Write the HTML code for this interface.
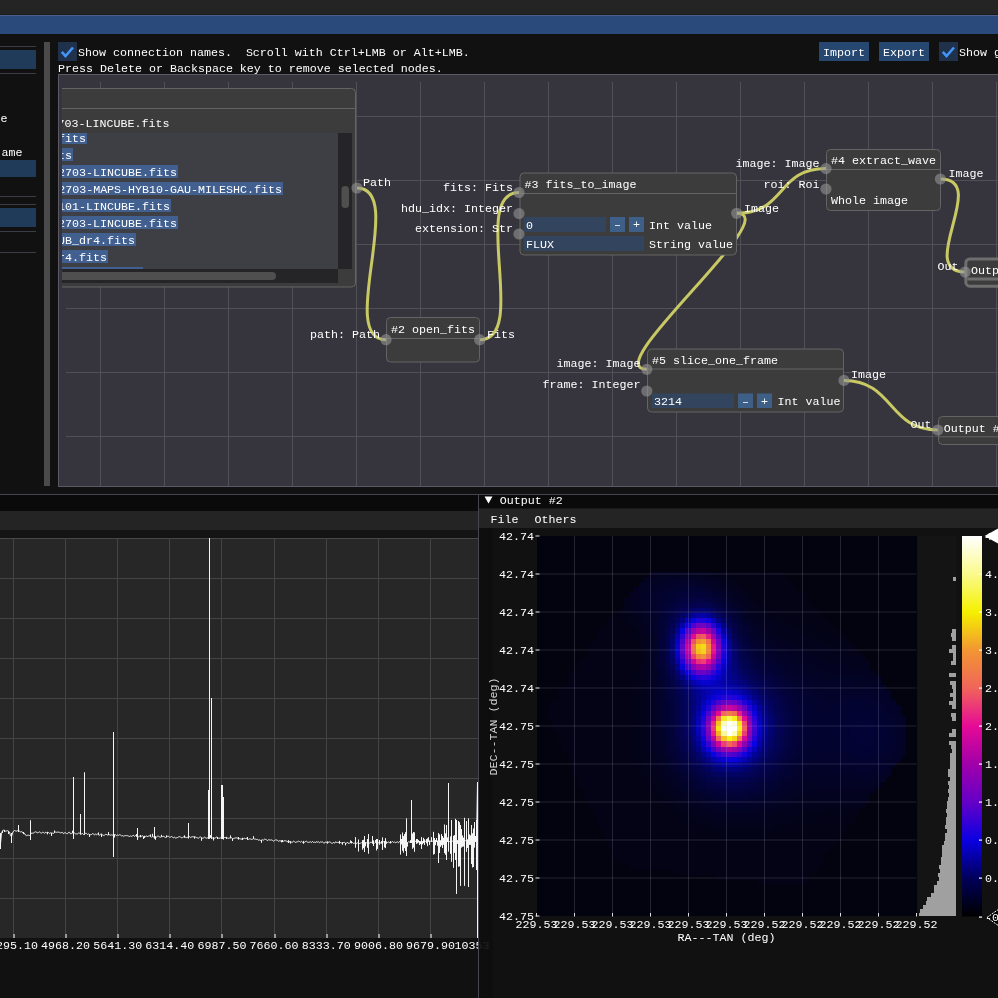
<!DOCTYPE html>
<html><head><meta charset="utf-8"><style>html,body{margin:0;padding:0;background:#111;overflow:hidden}svg{display:block;will-change:transform}text{font-family:"Liberation Mono",monospace;font-size:11.67px;white-space:pre}</style></head>
<body><svg width="998" height="998" viewBox="0 0 998 998" font-family="Liberation Mono" font-size="11.67"><rect x="0" y="0" width="998" height="998" fill="#111111" /><rect x="0" y="0" width="998" height="14" fill="#242424" /><rect x="0" y="14" width="998" height="1" fill="#1b1b1b" /><rect x="0" y="15" width="998" height="1" fill="#4a6189" /><rect x="0" y="16" width="998" height="18" fill="#294a7a" /><rect x="0" y="46" width="36" height="1" fill="#3c3c44" /><rect x="0" y="73" width="36" height="1" fill="#3c3c44" /><rect x="0" y="196" width="36" height="1" fill="#3c3c44" /><rect x="0" y="204" width="36" height="1" fill="#3c3c44" /><rect x="0" y="231" width="36" height="1" fill="#3c3c44" /><rect x="0" y="252" width="36" height="1" fill="#3c3c44" /><rect x="0" y="50" width="36" height="19" fill="#203a5a" /><rect x="0" y="160" width="36" height="17" fill="#203a5a" /><rect x="0" y="208" width="36" height="19" fill="#203a5a" /><text x="0.5" y="122" fill="#fff" >e</text><text x="1.5" y="156" fill="#fff" >ame</text><rect x="44" y="42" width="6" height="444" fill="#4a4a4a" /><rect x="58" y="42" width="19" height="19" fill="#1f314b" /><polyline points="61.8,51.8 65.5,56.1 73,47.5" fill="none" stroke="#4296fa" stroke-width="2.6"/><text x="78" y="56" fill="#fff" >Show connection names.  Scroll with Ctrl+LMB or Alt+LMB.</text><text x="58" y="72" fill="#fff" >Press Delete or Backspace key to remove selected nodes.</text><rect x="819" y="42" width="50" height="19" fill="#26476f" /><text x="844" y="56" fill="#fff" text-anchor="middle" >Import</text><rect x="879" y="42" width="50" height="19" fill="#26476f" /><text x="904" y="56" fill="#fff" text-anchor="middle" >Export</text><rect x="939" y="42" width="19" height="19" fill="#1f314b" /><polyline points="942.8,51.8 946.5,56.1 954,47.5" fill="none" stroke="#4296fa" stroke-width="2.6"/><text x="959" y="56" fill="#fff" >Show grid</text><rect x="58" y="74" width="940" height="413" fill="#36353d" /><rect x="58" y="74" width="940" height="1" fill="#5a5a66" /><rect x="58" y="486" width="940" height="1" fill="#5a5a66" /><rect x="58" y="74" width="1" height="413" fill="#5a5a66" /><rect x="100" y="82" width="1" height="404" fill="#505057" /><rect x="164" y="82" width="1" height="404" fill="#505057" /><rect x="228" y="82" width="1" height="404" fill="#505057" /><rect x="292" y="82" width="1" height="404" fill="#505057" /><rect x="356" y="82" width="1" height="404" fill="#505057" /><rect x="420" y="82" width="1" height="404" fill="#505057" /><rect x="484" y="82" width="1" height="404" fill="#505057" /><rect x="548" y="82" width="1" height="404" fill="#505057" /><rect x="612" y="82" width="1" height="404" fill="#505057" /><rect x="676" y="82" width="1" height="404" fill="#505057" /><rect x="740" y="82" width="1" height="404" fill="#505057" /><rect x="804" y="82" width="1" height="404" fill="#505057" /><rect x="868" y="82" width="1" height="404" fill="#505057" /><rect x="932" y="82" width="1" height="404" fill="#505057" /><rect x="996" y="82" width="1" height="404" fill="#505057" /><rect x="66" y="116" width="932" height="1" fill="#505057" /><rect x="66" y="180" width="932" height="1" fill="#505057" /><rect x="66" y="244" width="932" height="1" fill="#505057" /><rect x="66" y="308" width="932" height="1" fill="#505057" /><rect x="66" y="372" width="932" height="1" fill="#505057" /><rect x="66" y="436" width="932" height="1" fill="#505057" /><defs><clipPath id="c1"><rect x="62" y="74" width="940" height="420"/></clipPath><clipPath id="lb"><rect x="62" y="133" width="276" height="136"/></clipPath><clipPath id="cv"><rect x="59" y="75" width="939" height="411"/></clipPath></defs><g clip-path="url(#cv)"><path d="M844,380.4 C894,380.4 887.8,430 937.8,430" fill="none" stroke="#c8c864" stroke-width="3"/><path d="M736.7,213.3 C786.7,213.3 596.8,369.3 646.8,369.3" fill="none" stroke="#c8c864" stroke-width="3"/><path d="M940.4,179 C990.4,179 915.1,272 965.1,272" fill="none" stroke="#c8c864" stroke-width="3"/><path d="M736.7,213.3 C786.7,213.3 776,168.6 826,168.6" fill="none" stroke="#c8c864" stroke-width="3"/><path d="M479.7,339.7 C529.7,339.7 469,192.5 519,192.5" fill="none" stroke="#c8c864" stroke-width="3"/><path d="M357,188 C407,188 336,339.7 386,339.7" fill="none" stroke="#c8c864" stroke-width="3"/><g clip-path="url(#c1)"><rect x="20.5" y="88.5" width="335" height="198.5" rx="4" fill="#3c3c3c" stroke="#646464" stroke-width="1" /><rect x="21.0" y="108.0" width="334" height="1" fill="#646464" /><rect x="62" y="133" width="276" height="136" fill="#3e3e45" /><rect x="338" y="133" width="14" height="136" fill="#252528" /><rect x="341.5" y="186" width="7.5" height="22" rx="3.5" fill="#4f4f4f"/><rect x="62" y="269" width="276" height="14" fill="#252528" /><rect x="50" y="272" width="226" height="8" rx="4" fill="#4f4f4f"/><text x="169.5" y="127" fill="#fff" text-anchor="end" >manga-7443-12703-LINCUBE.fits</text><g clip-path="url(#lb)"><rect x="62" y="131" width="25" height="13" fill="#41608f" /><text x="86" y="142" fill="#fff" text-anchor="end" >manga-7443-12703-LOGCUBE.fits</text><rect x="62" y="148" width="11" height="13" fill="#41608f" /><text x="72" y="159" fill="#fff" text-anchor="end" >manga-8485-1901-MAPS.fits</text><rect x="62" y="165" width="116" height="13" fill="#41608f" /><text x="177" y="176" fill="#fff" text-anchor="end" >manga-7443-12703-LINCUBE.fits</text><rect x="62" y="182" width="221" height="13" fill="#41608f" /><text x="282" y="193" fill="#fff" text-anchor="end" >manga-7443-12703-MAPS-HYB10-GAU-MILESHC.fits</text><rect x="62" y="199" width="109" height="13" fill="#41608f" /><text x="170" y="210" fill="#fff" text-anchor="end" >manga-8485-12101-LINCUBE.fits</text><rect x="62" y="216" width="116" height="13" fill="#41608f" /><text x="177" y="227" fill="#fff" text-anchor="end" >manga-7443-12703-LINCUBE.fits</text><rect x="62" y="233" width="74" height="13" fill="#41608f" /><text x="135" y="244" fill="#fff" text-anchor="end" >manga-LINCUB_dr4.fits</text><rect x="62" y="250" width="46" height="13" fill="#41608f" /><text x="107" y="261" fill="#fff" text-anchor="end" >manga-dr4.fits</text><rect x="62" y="267" width="81" height="13" fill="#41608f" /><text x="142" y="278" fill="#fff" text-anchor="end" >manga-drpall-v2_4_3.fits</text></g></g><text x="363" y="185.5" fill="#fff" >Path</text><rect x="386.5" y="317.5" width="93" height="44.5" rx="4" fill="#3c3c3c" stroke="#646464" stroke-width="1" /><rect x="387.0" y="338.0" width="92" height="1" fill="#646464" /><text x="391" y="333" fill="#fff" >#2 open_fits</text><text x="380" y="338" fill="#fff" text-anchor="end" >path: Path</text><text x="487" y="338" fill="#fff" >Fits</text><rect x="520" y="173" width="216.5" height="82" rx="4" fill="#3c3c3c" stroke="#646464" stroke-width="1" /><rect x="520.5" y="193.0" width="215.5" height="1" fill="#646464" /><text x="524.5" y="187.5" fill="#fff" >#3 fits_to_image</text><rect x="524" y="217" width="82" height="15" fill="#32445e" /><text x="526" y="228.6" fill="#fff" >0</text><rect x="610" y="217" width="15" height="15" fill="#3e6088" /><text x="617.5" y="228.3" fill="#fff" text-anchor="middle" >–</text><rect x="629" y="217" width="15" height="15" fill="#3e6088" /><text x="636.5" y="228.3" fill="#fff" text-anchor="middle" >+</text><text x="649" y="229" fill="#fff" >Int value</text><rect x="524" y="236" width="120" height="15" fill="#32445e" /><text x="526" y="247.6" fill="#fff" >FLUX</text><text x="649" y="248" fill="#fff" >String value</text><text x="513" y="191" fill="#fff" text-anchor="end" >fits: Fits</text><text x="513" y="212" fill="#fff" text-anchor="end" >hdu_idx: Integer</text><text x="513" y="232" fill="#fff" text-anchor="end" >extension: Str</text><text x="744" y="211.5" fill="#fff" >Image</text><rect x="826.5" y="149.5" width="114" height="61" rx="4" fill="#3c3c3c" stroke="#646464" stroke-width="1" /><rect x="827.0" y="169.0" width="113" height="1" fill="#646464" /><text x="831" y="164" fill="#fff" >#4 extract_wave</text><text x="831" y="204" fill="#fff" >Whole image</text><text x="819.5" y="167" fill="#fff" text-anchor="end" >image: Image</text><text x="819.5" y="188" fill="#fff" text-anchor="end" >roi: Roi</text><text x="948.5" y="177" fill="#fff" >Image</text><rect x="647.5" y="349" width="196" height="63" rx="4" fill="#3c3c3c" stroke="#646464" stroke-width="1" /><rect x="648.0" y="368.5" width="195" height="1" fill="#646464" /><text x="652" y="364" fill="#fff" >#5 slice_one_frame</text><rect x="652" y="393.5" width="82" height="14.5" fill="#32445e" /><text x="654" y="405.1" fill="#fff" >3214</text><rect x="738" y="393.5" width="15" height="14.5" fill="#3e6088" /><text x="745.5" y="404.8" fill="#fff" text-anchor="middle" >–</text><rect x="757" y="393.5" width="15" height="14.5" fill="#3e6088" /><text x="764.5" y="404.8" fill="#fff" text-anchor="middle" >+</text><text x="777.5" y="405" fill="#fff" >Int value</text><text x="640.5" y="367" fill="#fff" text-anchor="end" >image: Image</text><text x="640.5" y="388" fill="#fff" text-anchor="end" >frame: Integer</text><text x="851" y="378" fill="#fff" >Image</text><rect x="965.8" y="259" width="60" height="27.2" rx="4" fill="#3c3c3c" stroke="#6e6e6e" stroke-width="3" /><rect x="967.3" y="277.5" width="57" height="3" fill="#6e6e6e" /><text x="971" y="273.6" fill="#fff" >Output #1</text><text x="958.5" y="269.5" fill="#fff" text-anchor="end" >Out</text><rect x="938.5" y="416.5" width="80" height="28" rx="4" fill="#3c3c3c" stroke="#646464" stroke-width="1" /><rect x="939.0" y="436.3" width="79" height="1" fill="#646464" /><text x="943.8" y="431.6" fill="#fff" >Output #2</text><text x="931.5" y="427.5" fill="#fff" text-anchor="end" >Out</text><circle cx="357" cy="188" r="5.6" fill="rgba(150,150,150,0.59)"/><circle cx="386" cy="339.7" r="5.6" fill="rgba(150,150,150,0.59)"/><circle cx="479.7" cy="339.7" r="5.6" fill="rgba(150,150,150,0.59)"/><circle cx="519" cy="192.5" r="5.6" fill="rgba(150,150,150,0.59)"/><circle cx="519" cy="213.6" r="5.6" fill="rgba(150,150,150,0.59)"/><circle cx="519" cy="234" r="5.6" fill="rgba(150,150,150,0.59)"/><circle cx="736.7" cy="213.3" r="5.6" fill="rgba(150,150,150,0.59)"/><circle cx="826" cy="168.6" r="5.6" fill="rgba(150,150,150,0.59)"/><circle cx="826" cy="189" r="5.6" fill="rgba(150,150,150,0.59)"/><circle cx="940.4" cy="179" r="5.6" fill="rgba(150,150,150,0.59)"/><circle cx="965.1" cy="272" r="5.6" fill="rgba(150,150,150,0.59)"/><circle cx="646.8" cy="369.3" r="5.6" fill="rgba(150,150,150,0.59)"/><circle cx="646.8" cy="391" r="5.6" fill="rgba(150,150,150,0.59)"/><circle cx="844" cy="380.4" r="5.6" fill="rgba(150,150,150,0.59)"/><circle cx="937.8" cy="430" r="5.6" fill="rgba(150,150,150,0.59)"/></g><rect x="0" y="494" width="998" height="1" fill="#46464f" /><rect x="0" y="495" width="478" height="16" fill="#0a0a0a" /><rect x="0" y="511" width="478" height="19" fill="#242424" /><rect x="0" y="530" width="478" height="8" fill="#141414" /><rect x="0" y="538" width="478" height="400" fill="#272727" /><rect x="0" y="538" width="478" height="1" fill="#484848" /><rect x="13" y="539" width="1" height="399" fill="#444444" /><rect x="65" y="539" width="1" height="399" fill="#444444" /><rect x="117" y="539" width="1" height="399" fill="#444444" /><rect x="169" y="539" width="1" height="399" fill="#444444" /><rect x="221" y="539" width="1" height="399" fill="#444444" /><rect x="274" y="539" width="1" height="399" fill="#444444" /><rect x="326" y="539" width="1" height="399" fill="#444444" /><rect x="378" y="539" width="1" height="399" fill="#444444" /><rect x="430" y="539" width="1" height="399" fill="#444444" /><rect x="0" y="578" width="478" height="1" fill="#444444" /><rect x="0" y="618" width="478" height="1" fill="#444444" /><rect x="0" y="658" width="478" height="1" fill="#444444" /><rect x="0" y="698" width="478" height="1" fill="#444444" /><rect x="0" y="738" width="478" height="1" fill="#444444" /><rect x="0" y="778" width="478" height="1" fill="#444444" /><rect x="0" y="818" width="478" height="1" fill="#444444" /><rect x="0" y="858" width="478" height="1" fill="#444444" /><rect x="0" y="898" width="478" height="1" fill="#444444" /><rect x="13" y="934" width="2" height="4" fill="#9a9a9a" /><rect x="65" y="934" width="2" height="4" fill="#9a9a9a" /><rect x="117" y="934" width="2" height="4" fill="#9a9a9a" /><rect x="169" y="934" width="2" height="4" fill="#9a9a9a" /><rect x="221" y="934" width="2" height="4" fill="#9a9a9a" /><rect x="274" y="934" width="2" height="4" fill="#9a9a9a" /><rect x="326" y="934" width="2" height="4" fill="#9a9a9a" /><rect x="378" y="934" width="2" height="4" fill="#9a9a9a" /><rect x="430" y="934" width="2" height="4" fill="#9a9a9a" /><defs><clipPath id="lw"><rect x="0" y="0" width="478" height="998"/></clipPath><clipPath id="rw"><rect x="478" y="0" width="520" height="998"/></clipPath></defs><text x="13.4" y="949" fill="#fff" text-anchor="middle" >4295.10</text><text x="65.5" y="949" fill="#fff" text-anchor="middle" >4968.20</text><text x="117.7" y="949" fill="#fff" text-anchor="middle" >5641.30</text><text x="169.8" y="949" fill="#fff" text-anchor="middle" >6314.40</text><text x="222.0" y="949" fill="#fff" text-anchor="middle" >6987.50</text><text x="274.1" y="949" fill="#fff" text-anchor="middle" >7660.60</text><text x="326.2" y="949" fill="#fff" text-anchor="middle" >8333.70</text><text x="378.4" y="949" fill="#fff" text-anchor="middle" >9006.80</text><text x="430.5" y="949" fill="#fff" text-anchor="middle" >9679.90</text><g clip-path="url(#lw)"><text x="482.5" y="949" fill="#fff" text-anchor="middle" >10353.00</text><path d="M0.5,843.7 L0.5,833.0 L0.5,849.0 L0.5,843.7 L1.5,833.3 L2.5,830.8 L2.5,830.8 L2.5,832.8 L2.5,830.8 L3.5,830.2 L4.5,830.2 L4.5,830.2 L4.5,832.0 L4.5,830.2 L5.5,831.3 L6.5,830.9 L7.5,830.7 L8.5,831.3 L8.5,831.3 L8.5,834.0 L8.5,831.3 L9.5,832.0 L10.5,835.7 L11.5,836.7 L11.5,833.0 L11.5,843.0 L11.5,836.7 L12.5,833.0 L13.5,831.1 L14.5,830.5 L15.5,830.9 L16.5,831.1 L17.5,830.7 L18.5,831.3 L18.5,825.0 L18.5,832.0 L18.5,831.3 L19.5,831.1 L20.5,831.9 L21.5,831.7 L22.5,832.1 L23.5,833.7 L23.5,832.0 L23.5,833.7 L23.5,833.7 L24.5,833.3 L25.5,835.1 L26.5,835.6 L27.5,835.3 L28.5,835.1 L29.5,835.5 L30.5,834.5 L30.5,820.5 L30.5,840.0 L30.5,834.5 L31.5,833.0 L32.5,833.2 L33.5,833.0 L34.5,832.3 L35.5,831.8 L36.5,832.0 L37.5,833.0 L38.5,832.4 L39.5,831.9 L40.5,832.7 L41.5,833.1 L42.5,832.3 L43.5,832.4 L44.5,833.4 L45.5,832.2 L46.5,832.7 L47.5,832.3 L47.5,832.3 L47.5,834.2 L47.5,832.3 L48.5,832.5 L49.5,833.4 L50.5,832.8 L51.5,833.0 L51.5,833.0 L51.5,835.8 L51.5,833.0 L52.5,833.2 L53.5,833.3 L54.5,832.6 L54.5,830.7 L54.5,832.6 L54.5,832.6 L55.5,832.1 L56.5,832.3 L57.5,832.1 L58.5,832.2 L59.5,832.1 L60.5,833.1 L61.5,832.6 L62.5,832.3 L63.5,833.7 L64.5,832.9 L65.5,832.7 L66.5,833.5 L67.5,833.7 L68.5,832.4 L69.5,832.2 L70.5,833.8 L71.5,833.4 L72.5,832.9 L72.5,830.8 L72.5,832.9 L72.5,832.9 L73.5,833.2 L73.5,777.0 L73.5,839.0 L73.5,833.2 L74.5,833.0 L75.5,833.8 L76.5,833.9 L77.5,833.9 L78.5,833.0 L79.5,833.2 L80.5,833.2 L80.5,814.0 L80.5,834.5 L80.5,833.2 L81.5,833.9 L82.5,833.5 L83.5,834.5 L84.5,833.5 L84.5,772.5 L84.5,834.7 L84.5,833.5 L85.5,833.3 L86.5,833.4 L87.5,834.5 L88.5,833.9 L89.5,834.5 L89.5,834.5 L89.5,836.8 L89.5,834.5 L90.5,834.7 L91.5,834.5 L92.5,833.6 L93.5,833.9 L94.5,835.0 L95.5,834.1 L96.5,834.7 L97.5,833.8 L98.5,834.9 L98.5,832.7 L98.5,834.9 L98.5,834.9 L99.5,835.2 L100.5,834.3 L101.5,834.0 L101.5,834.0 L101.5,836.9 L101.5,834.0 L102.5,834.9 L103.5,835.4 L104.5,835.3 L105.5,834.3 L106.5,834.5 L107.5,835.0 L108.5,834.8 L108.5,832.4 L108.5,834.8 L108.5,834.8 L109.5,834.7 L110.5,835.2 L111.5,834.9 L112.5,835.1 L113.5,835.2 L113.5,732.0 L113.5,857.0 L113.5,835.2 L114.5,834.7 L114.5,834.7 L114.5,837.3 L114.5,834.7 L115.5,834.7 L116.5,835.6 L117.5,835.0 L118.5,835.4 L119.5,834.7 L120.5,835.0 L121.5,835.9 L122.5,835.6 L123.5,836.2 L124.5,835.8 L125.5,835.6 L126.5,835.6 L127.5,835.7 L128.5,836.1 L129.5,836.5 L130.5,835.9 L131.5,836.4 L132.5,835.8 L133.5,835.3 L134.5,836.4 L135.5,835.5 L136.5,836.3 L136.5,834.0 L136.5,836.3 L136.5,836.3 L137.5,836.8 L137.5,828.0 L137.5,840.0 L137.5,836.8 L138.5,836.9 L139.5,836.2 L140.5,836.8 L140.5,835.1 L140.5,836.8 L140.5,836.8 L141.5,836.3 L142.5,835.8 L143.5,836.7 L143.5,836.7 L143.5,838.8 L143.5,836.7 L144.5,836.3 L144.5,836.3 L144.5,837.9 L144.5,836.3 L145.5,836.6 L146.5,835.8 L147.5,837.0 L148.5,835.9 L149.5,835.8 L150.5,836.3 L150.5,834.6 L150.5,836.3 L150.5,836.3 L151.5,837.3 L152.5,836.3 L152.5,833.9 L152.5,836.3 L152.5,836.3 L153.5,836.9 L154.5,836.1 L154.5,827.0 L154.5,838.5 L154.5,836.1 L155.5,836.7 L155.5,836.7 L155.5,839.6 L155.5,836.7 L156.5,837.1 L157.5,836.2 L158.5,836.2 L159.5,836.9 L160.5,837.1 L161.5,836.7 L161.5,834.9 L161.5,836.7 L161.5,836.7 L162.5,836.6 L163.5,836.3 L164.5,836.8 L165.5,837.5 L166.5,837.1 L166.5,835.6 L166.5,837.1 L166.5,837.1 L167.5,836.3 L168.5,836.3 L169.5,837.2 L170.5,837.1 L171.5,836.5 L172.5,837.1 L173.5,837.7 L174.5,837.2 L175.5,838.0 L176.5,837.8 L177.5,837.5 L178.5,837.0 L179.5,836.6 L180.5,836.9 L181.5,837.9 L182.5,837.6 L183.5,836.9 L184.5,837.3 L184.5,835.6 L184.5,837.3 L184.5,837.3 L185.5,837.0 L186.5,838.1 L187.5,837.0 L188.5,837.1 L188.5,823.0 L188.5,838.4 L188.5,837.1 L189.5,836.6 L190.5,837.4 L191.5,837.0 L192.5,836.7 L193.5,836.8 L194.5,836.8 L194.5,836.8 L194.5,838.4 L194.5,836.8 L195.5,837.1 L196.5,837.6 L197.5,837.8 L198.5,838.2 L199.5,837.3 L200.5,837.0 L201.5,837.8 L201.5,837.8 L201.5,840.5 L201.5,837.8 L202.5,838.2 L203.5,838.0 L204.5,837.1 L205.5,837.7 L206.5,838.2 L207.5,837.8 L208.5,838.0 L208.5,790.0 L208.5,838.7 L208.5,838.0 L209.5,837.3 L209.5,538.0 L209.5,838.7 L209.5,837.3 L210.5,837.5 L210.5,835.2 L210.5,837.5 L210.5,837.5 L211.5,837.8 L211.5,698.0 L211.5,838.7 L211.5,837.8 L212.5,838.0 L213.5,837.7 L213.5,837.7 L213.5,840.3 L213.5,837.7 L214.5,838.2 L215.5,837.8 L216.5,837.1 L217.5,837.4 L217.5,837.4 L217.5,839.0 L217.5,837.4 L218.5,838.2 L219.5,838.2 L220.5,837.9 L221.5,837.8 L221.5,785.0 L221.5,838.9 L221.5,837.8 L222.5,838.3 L222.5,785.0 L222.5,838.9 L222.5,838.3 L223.5,838.1 L223.5,797.0 L223.5,839.4 L223.5,838.1 L224.5,837.5 L225.5,837.6 L226.5,837.2 L226.5,837.2 L226.5,838.7 L226.5,837.2 L227.5,838.2 L228.5,838.3 L229.5,838.0 L230.5,838.0 L230.5,835.6 L230.5,838.0 L230.5,838.0 L231.5,837.6 L232.5,838.8 L232.5,838.8 L232.5,840.8 L232.5,838.8 L233.5,838.7 L234.5,838.2 L235.5,837.9 L236.5,837.9 L237.5,837.9 L238.5,839.2 L238.5,837.0 L238.5,839.2 L238.5,839.2 L239.5,838.6 L240.5,838.9 L241.5,839.3 L242.5,838.0 L242.5,838.0 L242.5,839.9 L242.5,838.0 L243.5,838.7 L244.5,838.3 L245.5,838.6 L246.5,838.1 L247.5,839.5 L247.5,837.2 L247.5,839.5 L247.5,839.5 L248.5,839.4 L249.5,838.8 L250.5,839.0 L251.5,839.4 L252.5,839.2 L253.5,838.6 L253.5,836.4 L253.5,838.6 L253.5,838.6 L254.5,839.1 L255.5,839.1 L256.5,839.5 L257.5,839.4 L258.5,840.2 L259.5,839.9 L260.5,840.4 L261.5,840.2 L261.5,840.2 L261.5,842.6 L261.5,840.2 L262.5,839.8 L263.5,840.1 L264.5,839.2 L265.5,839.4 L266.5,839.8 L267.5,840.5 L268.5,839.8 L269.5,839.9 L270.5,840.1 L271.5,839.9 L272.5,840.4 L273.5,841.1 L274.5,840.5 L275.5,839.9 L276.5,840.0 L277.5,840.3 L278.5,841.4 L279.5,840.7 L280.5,840.9 L281.5,840.7 L281.5,840.7 L281.5,842.2 L281.5,840.7 L282.5,841.7 L282.5,840.0 L282.5,841.7 L282.5,841.7 L283.5,841.3 L284.5,840.7 L285.5,840.8 L286.5,841.1 L287.5,841.8 L288.5,840.6 L288.5,840.6 L288.5,843.0 L288.5,840.6 L289.5,842.0 L290.5,841.6 L290.5,841.6 L290.5,843.4 L290.5,841.6 L291.5,842.2 L292.5,842.1 L293.5,841.2 L294.5,841.7 L295.5,842.4 L296.5,842.0 L297.5,841.8 L298.5,841.2 L299.5,841.5 L300.5,842.2 L301.5,841.4 L302.5,842.3 L303.5,841.4 L303.5,841.4 L303.5,843.5 L303.5,841.4 L304.5,842.2 L305.5,841.6 L306.5,841.3 L307.5,842.1 L308.5,842.4 L309.5,842.1 L310.5,841.8 L311.5,842.5 L312.5,841.4 L313.5,842.5 L314.5,841.9 L315.5,842.9 L316.5,841.5 L317.5,842.2 L318.5,841.8 L319.5,842.7 L320.5,841.9 L321.5,842.1 L322.5,841.9 L323.5,842.8 L324.5,843.1 L325.5,841.9 L326.5,842.3 L327.5,843.2 L327.5,841.6 L327.5,843.2 L327.5,843.2 L328.5,842.0 L329.5,841.9 L330.5,842.3 L331.5,843.1 L332.5,843.3 L333.5,842.3 L334.5,843.3 L335.5,841.8 L336.5,842.4 L337.5,842.4 L338.5,842.3 L339.5,843.4 L339.5,840.9 L339.5,843.4 L339.5,843.4 L340.5,842.2 L341.5,843.2 L342.5,842.6 L342.5,842.6 L342.5,844.5 L342.5,842.6 L343.5,842.5 L344.5,842.3 L345.5,843.4 L345.5,843.4 L345.5,845.2 L345.5,843.4 L346.5,843.3 L347.5,842.1 L348.5,843.5 L349.5,843.2 L350.5,842.6 L350.5,840.6 L350.5,842.6 L350.5,842.6 L351.5,843.0 L351.5,841.3 L351.5,843.0 L351.5,843.0 L352.5,842.6 L353.5,843.3 L354.5,843.1 L355.5,842.2 L355.5,837.3 L355.5,847.5 L355.5,842.2 L356.5,843.7 L357.5,842.8 L358.5,843.7 L358.5,839.7 L358.5,851.3 L358.5,843.7 L359.5,843.5 L360.5,843.2 L361.5,842.7 L362.5,842.3 L362.5,840.3 L362.5,849.5 L362.5,842.3 L363.5,842.2 L363.5,839.9 L363.5,848.1 L363.5,842.2 L364.5,843.7 L364.5,836.0 L364.5,852.0 L364.5,843.7 L365.5,843.6 L365.5,842.3 L365.5,846.2 L365.5,843.6 L366.5,842.8 L367.5,842.7 L367.5,839.2 L367.5,847.6 L367.5,842.7 L368.5,843.1 L368.5,834.0 L368.5,853.5 L368.5,843.1 L369.5,843.3 L370.5,842.1 L371.5,842.4 L372.5,842.5 L372.5,836.0 L372.5,843.7 L372.5,842.5 L373.5,842.2 L373.5,840.6 L373.5,845.9 L373.5,842.2 L374.5,843.3 L375.5,842.3 L375.5,840.3 L375.5,842.3 L375.5,842.3 L376.5,842.6 L376.5,839.0 L376.5,850.3 L376.5,842.6 L377.5,843.3 L377.5,839.1 L377.5,848.7 L377.5,843.3 L378.5,843.1 L379.5,841.8 L379.5,840.0 L379.5,844.6 L379.5,841.8 L380.5,843.2 L381.5,843.2 L381.5,841.3 L381.5,843.2 L381.5,843.2 L382.5,842.4 L382.5,837.6 L382.5,849.8 L382.5,842.4 L383.5,841.8 L384.5,842.6 L384.5,841.0 L384.5,847.2 L384.5,842.6 L385.5,841.9 L385.5,838.3 L385.5,848.1 L385.5,841.9 L386.5,841.9 L386.5,841.9 L386.5,843.5 L386.5,841.9 L387.5,842.6 L388.5,842.0 L389.5,842.7 L390.5,841.5 L390.5,841.5 L390.5,843.3 L390.5,841.5 L391.5,842.3 L392.5,841.5 L393.5,842.5 L394.5,841.8 L395.5,842.8 L396.5,842.2 L397.5,841.9 L398.5,842.8 L399.5,841.5 L400.5,841.5 L400.5,834.7 L400.5,854.4 L400.5,841.5 L401.5,842.5 L401.5,839.0 L401.5,844.3 L401.5,842.5 L402.5,841.4 L402.5,832.7 L402.5,850.5 L402.5,841.4 L403.5,842.6 L403.5,836.3 L403.5,852.5 L403.5,842.6 L404.5,841.9 L404.5,834.3 L404.5,848.1 L404.5,841.9 L405.5,842.6 L405.5,832.4 L405.5,851.0 L405.5,842.6 L406.5,842.7 L406.5,818.6 L406.5,856.0 L406.5,842.7 L407.5,842.7 L407.5,842.5 L407.5,846.4 L407.5,842.7 L408.5,841.7 L409.5,842.1 L410.5,841.3 L410.5,840.4 L410.5,842.9 L410.5,841.3 L411.5,842.4 L411.5,800.0 L411.5,842.8 L411.5,842.4 L412.5,841.3 L412.5,833.7 L412.5,848.7 L412.5,841.3 L413.5,841.6 L413.5,832.1 L413.5,847.4 L413.5,841.6 L414.5,842.4 L414.5,832.6 L414.5,851.6 L414.5,842.4 L415.5,841.1 L416.5,841.2 L416.5,839.0 L416.5,843.7 L416.5,841.2 L417.5,841.5 L417.5,839.1 L417.5,843.2 L417.5,841.5 L418.5,842.0 L418.5,840.3 L418.5,842.1 L418.5,842.0 L419.5,841.9 L419.5,841.0 L419.5,845.0 L419.5,841.9 L420.5,842.2 L420.5,841.5 L420.5,844.1 L420.5,842.2 L421.5,841.1 L421.5,837.3 L421.5,848.8 L421.5,841.1 L422.5,841.6 L422.5,841.5 L422.5,844.2 L422.5,841.6 L423.5,841.0 L423.5,837.9 L423.5,843.1 L423.5,841.0 L424.5,841.0 L424.5,839.5 L424.5,844.8 L424.5,841.0 L425.5,841.1 L426.5,842.5 L426.5,839.2 L426.5,843.2 L426.5,842.5 L427.5,842.4 L427.5,838.6 L427.5,846.1 L427.5,842.4 L428.5,841.1 L428.5,837.4 L428.5,841.4 L428.5,841.1 L429.5,841.4 L429.5,840.7 L429.5,845.0 L429.5,841.4 L430.5,841.2 L431.5,841.0 L431.5,837.3 L431.5,841.9 L431.5,841.0 L432.5,841.2 L433.5,841.1 L433.5,831.9 L433.5,854.4 L433.5,841.1 L434.5,842.2 L434.5,838.2 L434.5,853.8 L434.5,842.2 L435.5,841.6 L435.5,840.2 L435.5,845.1 L435.5,841.6 L436.5,841.6 L436.5,838.1 L436.5,842.0 L436.5,841.6 L437.5,842.3 L437.5,840.7 L437.5,845.5 L437.5,842.3 L438.5,841.1 L438.5,833.0 L438.5,863.0 L438.5,841.1 L439.5,841.6 L439.5,834.6 L439.5,853.0 L439.5,841.6 L440.5,841.0 L440.5,840.6 L440.5,846.7 L440.5,841.0 L441.5,841.1 L441.5,834.2 L441.5,845.2 L441.5,841.1 L442.5,841.7 L442.5,836.1 L442.5,847.8 L442.5,841.7 L443.5,840.9 L443.5,837.9 L443.5,844.5 L443.5,840.9 L444.5,842.1 L444.5,824.7 L444.5,853.1 L444.5,842.1 L445.5,840.7 L445.5,833.6 L445.5,854.5 L445.5,840.7 L446.5,841.2 L446.5,825.0 L446.5,860.0 L446.5,841.2 L447.5,840.9 L447.5,837.6 L447.5,841.9 L447.5,840.9 L448.5,842.1 L448.5,783.0 L448.5,851.4 L448.5,842.1 L449.5,841.6 L450.5,841.8 L450.5,836.6 L450.5,853.6 L450.5,841.8 L451.5,841.6 L451.5,820.0 L451.5,861.6 L451.5,841.6 L452.5,841.2 L453.5,841.7 L453.5,835.9 L453.5,867.6 L453.5,841.7 L454.5,841.4 L454.5,835.2 L454.5,852.6 L454.5,841.4 L455.5,841.7 L455.5,818.9 L455.5,859.9 L455.5,841.7 L456.5,840.7 L456.5,820.0 L456.5,893.8 L456.5,840.7 L457.5,841.5 L457.5,840.3 L457.5,843.7 L457.5,841.5 L458.5,840.9 L458.5,821.1 L458.5,866.5 L458.5,840.9 L459.5,841.6 L459.5,822.4 L459.5,866.2 L459.5,841.6 L460.5,841.2 L460.5,825.0 L460.5,885.7 L460.5,841.2 L461.5,840.6 L461.5,829.2 L461.5,847.4 L461.5,840.6 L462.5,841.6 L462.5,835.7 L462.5,846.6 L462.5,841.6 L463.5,840.8 L463.5,837.8 L463.5,846.3 L463.5,840.8 L464.5,841.2 L464.5,817.9 L464.5,885.7 L464.5,841.2 L465.5,840.7 L466.5,840.4 L466.5,821.2 L466.5,851.6 L466.5,840.4 L467.5,841.8 L467.5,839.6 L467.5,848.0 L467.5,841.8 L468.5,840.8 L468.5,818.6 L468.5,887.0 L468.5,840.8 L469.5,841.4 L469.5,834.6 L469.5,844.7 L469.5,841.4 L470.5,841.6 L470.5,835.6 L470.5,844.7 L470.5,841.6 L471.5,841.4 L471.5,825.0 L471.5,864.0 L471.5,841.4 L472.5,841.3 L472.5,833.5 L472.5,867.3 L472.5,841.3 L473.5,840.3 L473.5,828.7 L473.5,866.7 L473.5,840.3 L474.5,840.5 L474.5,822.3 L474.5,847.4 L474.5,840.5 L475.5,841.2 L475.5,836.1 L475.5,841.7 L475.5,841.2 L476.5,841.2 L476.5,820.0 L476.5,870.0 L476.5,841.2 L477.5,782.0 L477.5,782.0 L477.5,938.0 L477.5,782.0" fill="none" stroke="#f4f4f4" stroke-width="1" stroke-linejoin="bevel"/></g><rect x="478" y="494" width="1" height="504" fill="#46464f" /><rect x="479" y="495" width="519" height="13.5" fill="#0a0a0a" /><polygon points="484.5,496.5 492.5,496.5 488.5,503.5" fill="#fff"/><text x="499.8" y="504" fill="#fff" >Output #2</text><rect x="479" y="508.5" width="519" height="19.5" fill="#242424" /><text x="490.5" y="523" fill="#fff" >File</text><text x="534.6" y="523" fill="#fff" >Others</text><rect x="479" y="528" width="14" height="470" fill="#0e0e0e" /><defs><clipPath id="rw2"><rect x="478" y="0" width="12" height="998"/></clipPath></defs><g clip-path="url(#rw2)" opacity="0.08"><text x="482.5" y="949" fill="#fff" text-anchor="middle" >10353.00</text></g><text x="0" y="0" fill="#d4d4d4" font-family="Liberation Mono" font-size="11.67" text-anchor="middle" transform="translate(496.5,726.5) rotate(-90)">DEC--TAN (deg)</text><g shape-rendering="crispEdges"><rect x="536.50" y="536.00" width="380.30" height="5.44" fill="#03030f"/><rect x="536.50" y="541.14" width="380.30" height="5.44" fill="#03030f"/><rect x="536.50" y="546.27" width="380.30" height="5.44" fill="#03030f"/><rect x="536.50" y="551.41" width="380.30" height="5.44" fill="#03030f"/><rect x="536.50" y="556.54" width="380.30" height="5.44" fill="#03030f"/><rect x="536.50" y="561.68" width="380.30" height="5.44" fill="#03030f"/><rect x="536.50" y="566.81" width="380.30" height="5.44" fill="#03030f"/><rect x="536.50" y="571.95" width="113.27" height="5.44" fill="#03030f"/><rect x="649.47" y="571.95" width="10.57" height="5.44" fill="#03031e"/><rect x="659.74" y="571.95" width="41.38" height="5.44" fill="#030321"/><rect x="700.82" y="571.95" width="10.57" height="5.44" fill="#03031e"/><rect x="711.09" y="571.95" width="5.44" height="5.44" fill="#03031b"/><rect x="716.23" y="571.95" width="10.57" height="5.44" fill="#030318"/><rect x="726.50" y="571.95" width="56.79" height="5.44" fill="#030315"/><rect x="782.99" y="571.95" width="133.81" height="5.44" fill="#03030f"/><rect x="536.50" y="577.08" width="108.14" height="5.44" fill="#03030f"/><rect x="644.34" y="577.08" width="10.57" height="5.44" fill="#030321"/><rect x="654.61" y="577.08" width="15.71" height="5.44" fill="#030324"/><rect x="670.01" y="577.08" width="25.98" height="5.44" fill="#030327"/><rect x="695.69" y="577.08" width="10.57" height="5.44" fill="#030324"/><rect x="705.96" y="577.08" width="10.57" height="5.44" fill="#030321"/><rect x="716.23" y="577.08" width="5.44" height="5.44" fill="#03031e"/><rect x="721.36" y="577.08" width="5.44" height="5.44" fill="#03031b"/><rect x="726.50" y="577.08" width="10.57" height="5.44" fill="#030318"/><rect x="736.77" y="577.08" width="51.65" height="5.44" fill="#030315"/><rect x="788.12" y="577.08" width="128.68" height="5.44" fill="#03030f"/><rect x="536.50" y="582.22" width="103.00" height="5.44" fill="#03030f"/><rect x="639.20" y="582.22" width="5.44" height="5.44" fill="#030321"/><rect x="644.34" y="582.22" width="10.57" height="5.44" fill="#030324"/><rect x="654.61" y="582.22" width="10.57" height="5.44" fill="#030327"/><rect x="664.88" y="582.22" width="10.57" height="5.44" fill="#03032a"/><rect x="675.15" y="582.22" width="20.84" height="5.44" fill="#03032d"/><rect x="695.69" y="582.22" width="10.57" height="5.44" fill="#03032a"/><rect x="705.96" y="582.22" width="5.44" height="5.44" fill="#030327"/><rect x="711.09" y="582.22" width="5.44" height="5.44" fill="#030324"/><rect x="716.23" y="582.22" width="5.44" height="5.44" fill="#030321"/><rect x="721.36" y="582.22" width="5.44" height="5.44" fill="#03031e"/><rect x="726.50" y="582.22" width="10.57" height="5.44" fill="#03031b"/><rect x="736.77" y="582.22" width="5.44" height="5.44" fill="#030318"/><rect x="741.91" y="582.22" width="51.65" height="5.44" fill="#030315"/><rect x="793.26" y="582.22" width="123.54" height="5.44" fill="#03030f"/><rect x="536.50" y="587.35" width="97.87" height="5.44" fill="#03030f"/><rect x="634.07" y="587.35" width="5.44" height="5.44" fill="#030321"/><rect x="639.20" y="587.35" width="10.57" height="5.44" fill="#030324"/><rect x="649.47" y="587.35" width="5.44" height="5.44" fill="#030327"/><rect x="654.61" y="587.35" width="10.57" height="5.44" fill="#03032a"/><rect x="664.88" y="587.35" width="5.44" height="5.44" fill="#03032d"/><rect x="670.01" y="587.35" width="10.57" height="5.44" fill="#030330"/><rect x="680.28" y="587.35" width="20.84" height="5.44" fill="#030333"/><rect x="700.82" y="587.35" width="5.44" height="5.44" fill="#030330"/><rect x="705.96" y="587.35" width="5.44" height="5.44" fill="#03032d"/><rect x="711.09" y="587.35" width="5.44" height="5.44" fill="#03032a"/><rect x="716.23" y="587.35" width="5.44" height="5.44" fill="#030327"/><rect x="721.36" y="587.35" width="5.44" height="5.44" fill="#030324"/><rect x="726.50" y="587.35" width="5.44" height="5.44" fill="#030321"/><rect x="731.64" y="587.35" width="5.44" height="5.44" fill="#03031e"/><rect x="736.77" y="587.35" width="5.44" height="5.44" fill="#03031b"/><rect x="741.91" y="587.35" width="5.44" height="5.44" fill="#030318"/><rect x="747.04" y="587.35" width="51.65" height="5.44" fill="#030315"/><rect x="798.39" y="587.35" width="118.41" height="5.44" fill="#03030f"/><rect x="536.50" y="592.49" width="92.73" height="5.44" fill="#03030f"/><rect x="628.93" y="592.49" width="5.44" height="5.44" fill="#03031e"/><rect x="634.07" y="592.49" width="5.44" height="5.44" fill="#030321"/><rect x="639.20" y="592.49" width="5.44" height="5.44" fill="#030324"/><rect x="644.34" y="592.49" width="5.44" height="5.44" fill="#030327"/><rect x="649.47" y="592.49" width="5.44" height="5.44" fill="#03032a"/><rect x="654.61" y="592.49" width="10.57" height="5.44" fill="#03032d"/><rect x="664.88" y="592.49" width="5.44" height="5.44" fill="#030330"/><rect x="670.01" y="592.49" width="5.44" height="5.44" fill="#030333"/><rect x="675.15" y="592.49" width="5.44" height="5.44" fill="#030336"/><rect x="680.28" y="592.49" width="25.98" height="5.44" fill="#030339"/><rect x="705.96" y="592.49" width="5.44" height="5.44" fill="#030336"/><rect x="711.09" y="592.49" width="5.44" height="5.44" fill="#030333"/><rect x="716.23" y="592.49" width="5.44" height="5.44" fill="#03032d"/><rect x="721.36" y="592.49" width="5.44" height="5.44" fill="#03032a"/><rect x="726.50" y="592.49" width="5.44" height="5.44" fill="#030324"/><rect x="731.64" y="592.49" width="5.44" height="5.44" fill="#030321"/><rect x="736.77" y="592.49" width="5.44" height="5.44" fill="#03031e"/><rect x="741.91" y="592.49" width="5.44" height="5.44" fill="#03031b"/><rect x="747.04" y="592.49" width="5.44" height="5.44" fill="#030318"/><rect x="752.18" y="592.49" width="51.65" height="5.44" fill="#030315"/><rect x="803.53" y="592.49" width="113.27" height="5.44" fill="#03030f"/><rect x="536.50" y="597.62" width="87.60" height="5.44" fill="#03030f"/><rect x="623.80" y="597.62" width="5.44" height="5.44" fill="#03031b"/><rect x="628.93" y="597.62" width="5.44" height="5.44" fill="#03031e"/><rect x="634.07" y="597.62" width="5.44" height="5.44" fill="#030321"/><rect x="639.20" y="597.62" width="5.44" height="5.44" fill="#030324"/><rect x="644.34" y="597.62" width="5.44" height="5.44" fill="#030327"/><rect x="649.47" y="597.62" width="5.44" height="5.44" fill="#03032a"/><rect x="654.61" y="597.62" width="5.44" height="5.44" fill="#03032d"/><rect x="659.74" y="597.62" width="5.44" height="5.44" fill="#030330"/><rect x="664.88" y="597.62" width="5.44" height="5.44" fill="#030333"/><rect x="670.01" y="597.62" width="5.44" height="5.44" fill="#030336"/><rect x="675.15" y="597.62" width="5.44" height="5.44" fill="#03033c"/><rect x="680.28" y="597.62" width="5.44" height="5.44" fill="#03033f"/><rect x="685.42" y="597.62" width="10.57" height="5.44" fill="#030342"/><rect x="695.69" y="597.62" width="5.44" height="5.44" fill="#030345"/><rect x="700.82" y="597.62" width="5.44" height="5.44" fill="#030342"/><rect x="705.96" y="597.62" width="5.44" height="5.44" fill="#03033f"/><rect x="711.09" y="597.62" width="5.44" height="5.44" fill="#030339"/><rect x="716.23" y="597.62" width="5.44" height="5.44" fill="#030336"/><rect x="721.36" y="597.62" width="5.44" height="5.44" fill="#030330"/><rect x="726.50" y="597.62" width="5.44" height="5.44" fill="#03032a"/><rect x="731.64" y="597.62" width="5.44" height="5.44" fill="#030324"/><rect x="736.77" y="597.62" width="5.44" height="5.44" fill="#030321"/><rect x="741.91" y="597.62" width="5.44" height="5.44" fill="#03031e"/><rect x="747.04" y="597.62" width="5.44" height="5.44" fill="#03031b"/><rect x="752.18" y="597.62" width="5.44" height="5.44" fill="#030318"/><rect x="757.31" y="597.62" width="51.65" height="5.44" fill="#030315"/><rect x="808.66" y="597.62" width="108.14" height="5.44" fill="#03030f"/><rect x="536.50" y="602.76" width="87.60" height="5.44" fill="#03030f"/><rect x="623.80" y="602.76" width="5.44" height="5.44" fill="#03031b"/><rect x="628.93" y="602.76" width="5.44" height="5.44" fill="#03031e"/><rect x="634.07" y="602.76" width="5.44" height="5.44" fill="#030321"/><rect x="639.20" y="602.76" width="5.44" height="5.44" fill="#030324"/><rect x="644.34" y="602.76" width="5.44" height="5.44" fill="#030327"/><rect x="649.47" y="602.76" width="5.44" height="5.44" fill="#03032a"/><rect x="654.61" y="602.76" width="5.44" height="5.44" fill="#03032d"/><rect x="659.74" y="602.76" width="5.44" height="5.44" fill="#030333"/><rect x="664.88" y="602.76" width="5.44" height="5.44" fill="#030336"/><rect x="670.01" y="602.76" width="5.44" height="5.44" fill="#03033c"/><rect x="675.15" y="602.76" width="5.44" height="5.44" fill="#030342"/><rect x="680.28" y="602.76" width="5.44" height="5.44" fill="#030345"/><rect x="685.42" y="602.76" width="5.44" height="5.44" fill="#03034b"/><rect x="690.55" y="602.76" width="15.71" height="5.44" fill="#030351"/><rect x="705.96" y="602.76" width="5.44" height="5.44" fill="#03034e"/><rect x="711.09" y="602.76" width="5.44" height="5.44" fill="#030345"/><rect x="716.23" y="602.76" width="5.44" height="5.44" fill="#03033f"/><rect x="721.36" y="602.76" width="5.44" height="5.44" fill="#030336"/><rect x="726.50" y="602.76" width="5.44" height="5.44" fill="#030330"/><rect x="731.64" y="602.76" width="5.44" height="5.44" fill="#03032a"/><rect x="736.77" y="602.76" width="5.44" height="5.44" fill="#030324"/><rect x="741.91" y="602.76" width="5.44" height="5.44" fill="#030321"/><rect x="747.04" y="602.76" width="5.44" height="5.44" fill="#03031e"/><rect x="752.18" y="602.76" width="5.44" height="5.44" fill="#03031b"/><rect x="757.31" y="602.76" width="10.57" height="5.44" fill="#030318"/><rect x="767.58" y="602.76" width="46.52" height="5.44" fill="#030315"/><rect x="813.80" y="602.76" width="103.00" height="5.44" fill="#03030f"/><rect x="536.50" y="607.89" width="82.46" height="5.44" fill="#03030f"/><rect x="618.66" y="607.89" width="5.44" height="5.44" fill="#030318"/><rect x="623.80" y="607.89" width="5.44" height="5.44" fill="#03031b"/><rect x="628.93" y="607.89" width="5.44" height="5.44" fill="#03031e"/><rect x="634.07" y="607.89" width="10.57" height="5.44" fill="#030321"/><rect x="644.34" y="607.89" width="5.44" height="5.44" fill="#030327"/><rect x="649.47" y="607.89" width="5.44" height="5.44" fill="#03032a"/><rect x="654.61" y="607.89" width="5.44" height="5.44" fill="#03032d"/><rect x="659.74" y="607.89" width="5.44" height="5.44" fill="#030333"/><rect x="664.88" y="607.89" width="5.44" height="5.44" fill="#030339"/><rect x="670.01" y="607.89" width="5.44" height="5.44" fill="#03033f"/><rect x="675.15" y="607.89" width="5.44" height="5.44" fill="#030348"/><rect x="680.28" y="607.89" width="5.44" height="5.44" fill="#030351"/><rect x="685.42" y="607.89" width="5.44" height="5.44" fill="#03035a"/><rect x="690.55" y="607.89" width="5.44" height="5.44" fill="#030366"/><rect x="695.69" y="607.89" width="10.57" height="5.44" fill="#03036f"/><rect x="705.96" y="607.89" width="5.44" height="5.44" fill="#030366"/><rect x="711.09" y="607.89" width="5.44" height="5.44" fill="#030357"/><rect x="716.23" y="607.89" width="5.44" height="5.44" fill="#03034b"/><rect x="721.36" y="607.89" width="5.44" height="5.44" fill="#03033f"/><rect x="726.50" y="607.89" width="5.44" height="5.44" fill="#030336"/><rect x="731.64" y="607.89" width="5.44" height="5.44" fill="#030330"/><rect x="736.77" y="607.89" width="5.44" height="5.44" fill="#03032a"/><rect x="741.91" y="607.89" width="5.44" height="5.44" fill="#030324"/><rect x="747.04" y="607.89" width="5.44" height="5.44" fill="#03031e"/><rect x="752.18" y="607.89" width="10.57" height="5.44" fill="#03031b"/><rect x="762.45" y="607.89" width="10.57" height="5.44" fill="#030318"/><rect x="772.72" y="607.89" width="46.52" height="5.44" fill="#030315"/><rect x="818.93" y="607.89" width="97.87" height="5.44" fill="#03030f"/><rect x="536.50" y="613.03" width="77.33" height="5.44" fill="#03030f"/><rect x="613.53" y="613.03" width="5.44" height="5.44" fill="#030315"/><rect x="618.66" y="613.03" width="10.57" height="5.44" fill="#030318"/><rect x="628.93" y="613.03" width="5.44" height="5.44" fill="#03031b"/><rect x="634.07" y="613.03" width="5.44" height="5.44" fill="#03031e"/><rect x="639.20" y="613.03" width="5.44" height="5.44" fill="#030321"/><rect x="644.34" y="613.03" width="5.44" height="5.44" fill="#030324"/><rect x="649.47" y="613.03" width="5.44" height="5.44" fill="#03032a"/><rect x="654.61" y="613.03" width="5.44" height="5.44" fill="#03032d"/><rect x="659.74" y="613.03" width="5.44" height="5.44" fill="#030333"/><rect x="664.88" y="613.03" width="5.44" height="5.44" fill="#03033c"/><rect x="670.01" y="613.03" width="5.44" height="5.44" fill="#030345"/><rect x="675.15" y="613.03" width="5.44" height="5.44" fill="#030351"/><rect x="680.28" y="613.03" width="5.44" height="5.44" fill="#030360"/><rect x="685.42" y="613.03" width="5.44" height="5.44" fill="#03037b"/><rect x="690.55" y="613.03" width="5.44" height="5.44" fill="#030396"/><rect x="695.69" y="613.03" width="5.44" height="5.44" fill="#0603a5"/><rect x="700.82" y="613.03" width="5.44" height="5.44" fill="#0603a8"/><rect x="705.96" y="613.03" width="5.44" height="5.44" fill="#030396"/><rect x="711.09" y="613.03" width="5.44" height="5.44" fill="#03037b"/><rect x="716.23" y="613.03" width="5.44" height="5.44" fill="#030360"/><rect x="721.36" y="613.03" width="5.44" height="5.44" fill="#03034e"/><rect x="726.50" y="613.03" width="5.44" height="5.44" fill="#03033f"/><rect x="731.64" y="613.03" width="5.44" height="5.44" fill="#030336"/><rect x="736.77" y="613.03" width="5.44" height="5.44" fill="#03032d"/><rect x="741.91" y="613.03" width="5.44" height="5.44" fill="#030327"/><rect x="747.04" y="613.03" width="5.44" height="5.44" fill="#030321"/><rect x="752.18" y="613.03" width="5.44" height="5.44" fill="#03031e"/><rect x="757.31" y="613.03" width="10.57" height="5.44" fill="#03031b"/><rect x="767.58" y="613.03" width="20.84" height="5.44" fill="#030318"/><rect x="788.12" y="613.03" width="36.25" height="5.44" fill="#030315"/><rect x="824.07" y="613.03" width="92.73" height="5.44" fill="#03030f"/><rect x="536.50" y="618.16" width="72.19" height="5.44" fill="#03030f"/><rect x="608.39" y="618.16" width="15.71" height="5.44" fill="#030315"/><rect x="623.80" y="618.16" width="5.44" height="5.44" fill="#030318"/><rect x="628.93" y="618.16" width="10.57" height="5.44" fill="#03031b"/><rect x="639.20" y="618.16" width="5.44" height="5.44" fill="#03031e"/><rect x="644.34" y="618.16" width="5.44" height="5.44" fill="#030324"/><rect x="649.47" y="618.16" width="5.44" height="5.44" fill="#030327"/><rect x="654.61" y="618.16" width="5.44" height="5.44" fill="#03032d"/><rect x="659.74" y="618.16" width="5.44" height="5.44" fill="#030336"/><rect x="664.88" y="618.16" width="5.44" height="5.44" fill="#03033f"/><rect x="670.01" y="618.16" width="5.44" height="5.44" fill="#03034b"/><rect x="675.15" y="618.16" width="5.44" height="5.44" fill="#03035d"/><rect x="680.28" y="618.16" width="5.44" height="5.44" fill="#030381"/><rect x="685.42" y="618.16" width="5.44" height="5.44" fill="#0603ae"/><rect x="690.55" y="618.16" width="5.44" height="5.44" fill="#0903de"/><rect x="695.69" y="618.16" width="10.57" height="5.44" fill="#1e03db"/><rect x="705.96" y="618.16" width="5.44" height="5.44" fill="#0c03de"/><rect x="711.09" y="618.16" width="5.44" height="5.44" fill="#0603b7"/><rect x="716.23" y="618.16" width="5.44" height="5.44" fill="#030387"/><rect x="721.36" y="618.16" width="5.44" height="5.44" fill="#030360"/><rect x="726.50" y="618.16" width="5.44" height="5.44" fill="#03034b"/><rect x="731.64" y="618.16" width="5.44" height="5.44" fill="#03033c"/><rect x="736.77" y="618.16" width="5.44" height="5.44" fill="#030333"/><rect x="741.91" y="618.16" width="5.44" height="5.44" fill="#03032a"/><rect x="747.04" y="618.16" width="5.44" height="5.44" fill="#030324"/><rect x="752.18" y="618.16" width="5.44" height="5.44" fill="#030321"/><rect x="757.31" y="618.16" width="5.44" height="5.44" fill="#03031e"/><rect x="762.45" y="618.16" width="15.71" height="5.44" fill="#03031b"/><rect x="777.85" y="618.16" width="20.84" height="5.44" fill="#030318"/><rect x="798.39" y="618.16" width="31.11" height="5.44" fill="#030315"/><rect x="829.20" y="618.16" width="87.60" height="5.44" fill="#03030f"/><rect x="536.50" y="623.30" width="67.06" height="5.44" fill="#03030f"/><rect x="603.26" y="623.30" width="25.98" height="5.44" fill="#030315"/><rect x="628.93" y="623.30" width="5.44" height="5.44" fill="#030318"/><rect x="634.07" y="623.30" width="5.44" height="5.44" fill="#03031b"/><rect x="639.20" y="623.30" width="5.44" height="5.44" fill="#03031e"/><rect x="644.34" y="623.30" width="5.44" height="5.44" fill="#030321"/><rect x="649.47" y="623.30" width="5.44" height="5.44" fill="#030327"/><rect x="654.61" y="623.30" width="5.44" height="5.44" fill="#03032d"/><rect x="659.74" y="623.30" width="5.44" height="5.44" fill="#030336"/><rect x="664.88" y="623.30" width="5.44" height="5.44" fill="#030342"/><rect x="670.01" y="623.30" width="5.44" height="5.44" fill="#030351"/><rect x="675.15" y="623.30" width="5.44" height="5.44" fill="#030372"/><rect x="680.28" y="623.30" width="5.44" height="5.44" fill="#0603ab"/><rect x="685.42" y="623.30" width="5.44" height="5.44" fill="#1803db"/><rect x="690.55" y="623.30" width="5.44" height="5.44" fill="#4e03cc"/><rect x="695.69" y="623.30" width="5.44" height="5.44" fill="#6f03c0"/><rect x="700.82" y="623.30" width="5.44" height="5.44" fill="#7203c0"/><rect x="705.96" y="623.30" width="5.44" height="5.44" fill="#5a03c9"/><rect x="711.09" y="623.30" width="5.44" height="5.44" fill="#2703d8"/><rect x="716.23" y="623.30" width="5.44" height="5.44" fill="#0603bd"/><rect x="721.36" y="623.30" width="5.44" height="5.44" fill="#03037e"/><rect x="726.50" y="623.30" width="5.44" height="5.44" fill="#030357"/><rect x="731.64" y="623.30" width="5.44" height="5.44" fill="#030345"/><rect x="736.77" y="623.30" width="5.44" height="5.44" fill="#030339"/><rect x="741.91" y="623.30" width="5.44" height="5.44" fill="#030330"/><rect x="747.04" y="623.30" width="5.44" height="5.44" fill="#03032a"/><rect x="752.18" y="623.30" width="5.44" height="5.44" fill="#030324"/><rect x="757.31" y="623.30" width="5.44" height="5.44" fill="#030321"/><rect x="762.45" y="623.30" width="10.57" height="5.44" fill="#03031e"/><rect x="772.72" y="623.30" width="15.71" height="5.44" fill="#03031b"/><rect x="788.12" y="623.30" width="25.98" height="5.44" fill="#030318"/><rect x="813.80" y="623.30" width="20.84" height="5.44" fill="#030315"/><rect x="834.34" y="623.30" width="82.46" height="5.44" fill="#03030f"/><rect x="536.50" y="628.43" width="61.92" height="5.44" fill="#03030f"/><rect x="598.12" y="628.43" width="36.25" height="5.44" fill="#030315"/><rect x="634.07" y="628.43" width="5.44" height="5.44" fill="#030318"/><rect x="639.20" y="628.43" width="5.44" height="5.44" fill="#03031b"/><rect x="644.34" y="628.43" width="5.44" height="5.44" fill="#030321"/><rect x="649.47" y="628.43" width="5.44" height="5.44" fill="#030327"/><rect x="654.61" y="628.43" width="5.44" height="5.44" fill="#03032d"/><rect x="659.74" y="628.43" width="5.44" height="5.44" fill="#030336"/><rect x="664.88" y="628.43" width="5.44" height="5.44" fill="#030345"/><rect x="670.01" y="628.43" width="5.44" height="5.44" fill="#03035a"/><rect x="675.15" y="628.43" width="5.44" height="5.44" fill="#03038d"/><rect x="680.28" y="628.43" width="5.44" height="5.44" fill="#0903e1"/><rect x="685.42" y="628.43" width="5.44" height="5.44" fill="#5703cc"/><rect x="690.55" y="628.43" width="5.44" height="5.44" fill="#9303ae"/><rect x="695.69" y="628.43" width="5.44" height="5.44" fill="#bd039f"/><rect x="700.82" y="628.43" width="5.44" height="5.44" fill="#c6039f"/><rect x="705.96" y="628.43" width="5.44" height="5.44" fill="#9f03a8"/><rect x="711.09" y="628.43" width="5.44" height="5.44" fill="#6903c3"/><rect x="716.23" y="628.43" width="5.44" height="5.44" fill="#1e03db"/><rect x="721.36" y="628.43" width="5.44" height="5.44" fill="#0303a2"/><rect x="726.50" y="628.43" width="5.44" height="5.44" fill="#030369"/><rect x="731.64" y="628.43" width="5.44" height="5.44" fill="#03034b"/><rect x="736.77" y="628.43" width="5.44" height="5.44" fill="#03033c"/><rect x="741.91" y="628.43" width="5.44" height="5.44" fill="#030333"/><rect x="747.04" y="628.43" width="5.44" height="5.44" fill="#03032d"/><rect x="752.18" y="628.43" width="5.44" height="5.44" fill="#030327"/><rect x="757.31" y="628.43" width="5.44" height="5.44" fill="#030324"/><rect x="762.45" y="628.43" width="5.44" height="5.44" fill="#030321"/><rect x="767.58" y="628.43" width="10.57" height="5.44" fill="#03031e"/><rect x="777.85" y="628.43" width="20.84" height="5.44" fill="#03031b"/><rect x="798.39" y="628.43" width="25.98" height="5.44" fill="#030318"/><rect x="824.07" y="628.43" width="15.71" height="5.44" fill="#030315"/><rect x="839.47" y="628.43" width="77.33" height="5.44" fill="#03030f"/><rect x="536.50" y="633.57" width="61.92" height="5.44" fill="#03030f"/><rect x="598.12" y="633.57" width="36.25" height="5.44" fill="#030315"/><rect x="634.07" y="633.57" width="5.44" height="5.44" fill="#030318"/><rect x="639.20" y="633.57" width="5.44" height="5.44" fill="#03031b"/><rect x="644.34" y="633.57" width="5.44" height="5.44" fill="#03031e"/><rect x="649.47" y="633.57" width="5.44" height="5.44" fill="#030324"/><rect x="654.61" y="633.57" width="5.44" height="5.44" fill="#03032d"/><rect x="659.74" y="633.57" width="5.44" height="5.44" fill="#030339"/><rect x="664.88" y="633.57" width="5.44" height="5.44" fill="#030348"/><rect x="670.01" y="633.57" width="5.44" height="5.44" fill="#030366"/><rect x="675.15" y="633.57" width="5.44" height="5.44" fill="#0603a8"/><rect x="680.28" y="633.57" width="5.44" height="5.44" fill="#3003d5"/><rect x="685.42" y="633.57" width="5.44" height="5.44" fill="#8703b4"/><rect x="690.55" y="633.57" width="5.44" height="5.44" fill="#de0996"/><rect x="695.69" y="633.57" width="5.44" height="5.44" fill="#ed5463"/><rect x="700.82" y="633.57" width="5.44" height="5.44" fill="#ed5d5d"/><rect x="705.96" y="633.57" width="5.44" height="5.44" fill="#e71b87"/><rect x="711.09" y="633.57" width="5.44" height="5.44" fill="#9c03ab"/><rect x="716.23" y="633.57" width="5.44" height="5.44" fill="#4b03cc"/><rect x="721.36" y="633.57" width="5.44" height="5.44" fill="#0603c9"/><rect x="726.50" y="633.57" width="5.44" height="5.44" fill="#03037b"/><rect x="731.64" y="633.57" width="5.44" height="5.44" fill="#030354"/><rect x="736.77" y="633.57" width="5.44" height="5.44" fill="#030342"/><rect x="741.91" y="633.57" width="5.44" height="5.44" fill="#030339"/><rect x="747.04" y="633.57" width="5.44" height="5.44" fill="#030330"/><rect x="752.18" y="633.57" width="5.44" height="5.44" fill="#03032a"/><rect x="757.31" y="633.57" width="5.44" height="5.44" fill="#030327"/><rect x="762.45" y="633.57" width="5.44" height="5.44" fill="#030324"/><rect x="767.58" y="633.57" width="5.44" height="5.44" fill="#030321"/><rect x="772.72" y="633.57" width="15.71" height="5.44" fill="#03031e"/><rect x="788.12" y="633.57" width="20.84" height="5.44" fill="#03031b"/><rect x="808.66" y="633.57" width="25.98" height="5.44" fill="#030318"/><rect x="834.34" y="633.57" width="10.57" height="5.44" fill="#030315"/><rect x="844.61" y="633.57" width="72.19" height="5.44" fill="#03030f"/><rect x="536.50" y="638.70" width="56.79" height="5.44" fill="#03030f"/><rect x="592.99" y="638.70" width="41.38" height="5.44" fill="#030315"/><rect x="634.07" y="638.70" width="5.44" height="5.44" fill="#030318"/><rect x="639.20" y="638.70" width="5.44" height="5.44" fill="#03031b"/><rect x="644.34" y="638.70" width="5.44" height="5.44" fill="#03031e"/><rect x="649.47" y="638.70" width="5.44" height="5.44" fill="#030324"/><rect x="654.61" y="638.70" width="5.44" height="5.44" fill="#03032d"/><rect x="659.74" y="638.70" width="5.44" height="5.44" fill="#030339"/><rect x="664.88" y="638.70" width="5.44" height="5.44" fill="#03034b"/><rect x="670.01" y="638.70" width="5.44" height="5.44" fill="#03036f"/><rect x="675.15" y="638.70" width="5.44" height="5.44" fill="#0603c0"/><rect x="680.28" y="638.70" width="5.44" height="5.44" fill="#4e03cc"/><rect x="685.42" y="638.70" width="5.44" height="5.44" fill="#ae03a5"/><rect x="690.55" y="638.70" width="5.44" height="5.44" fill="#ed5463"/><rect x="695.69" y="638.70" width="5.44" height="5.44" fill="#f09333"/><rect x="700.82" y="638.70" width="5.44" height="5.44" fill="#f0a22a"/><rect x="705.96" y="638.70" width="5.44" height="5.44" fill="#f06f51"/><rect x="711.09" y="638.70" width="5.44" height="5.44" fill="#cf069c"/><rect x="716.23" y="638.70" width="5.44" height="5.44" fill="#6f03c0"/><rect x="721.36" y="638.70" width="5.44" height="5.44" fill="#0f03de"/><rect x="726.50" y="638.70" width="5.44" height="5.44" fill="#03038d"/><rect x="731.64" y="638.70" width="5.44" height="5.44" fill="#03035d"/><rect x="736.77" y="638.70" width="5.44" height="5.44" fill="#030348"/><rect x="741.91" y="638.70" width="5.44" height="5.44" fill="#03033c"/><rect x="747.04" y="638.70" width="5.44" height="5.44" fill="#030333"/><rect x="752.18" y="638.70" width="5.44" height="5.44" fill="#03032d"/><rect x="757.31" y="638.70" width="5.44" height="5.44" fill="#03032a"/><rect x="762.45" y="638.70" width="5.44" height="5.44" fill="#030327"/><rect x="767.58" y="638.70" width="5.44" height="5.44" fill="#030324"/><rect x="772.72" y="638.70" width="10.57" height="5.44" fill="#030321"/><rect x="782.99" y="638.70" width="15.71" height="5.44" fill="#03031e"/><rect x="798.39" y="638.70" width="25.98" height="5.44" fill="#03031b"/><rect x="824.07" y="638.70" width="25.98" height="5.44" fill="#030318"/><rect x="849.74" y="638.70" width="67.06" height="5.44" fill="#03030f"/><rect x="536.50" y="643.84" width="51.65" height="5.44" fill="#03030f"/><rect x="587.85" y="643.84" width="51.65" height="5.44" fill="#030315"/><rect x="639.20" y="643.84" width="5.44" height="5.44" fill="#03031b"/><rect x="644.34" y="643.84" width="5.44" height="5.44" fill="#03031e"/><rect x="649.47" y="643.84" width="5.44" height="5.44" fill="#030324"/><rect x="654.61" y="643.84" width="5.44" height="5.44" fill="#03032d"/><rect x="659.74" y="643.84" width="5.44" height="5.44" fill="#030339"/><rect x="664.88" y="643.84" width="5.44" height="5.44" fill="#03034b"/><rect x="670.01" y="643.84" width="5.44" height="5.44" fill="#030375"/><rect x="675.15" y="643.84" width="5.44" height="5.44" fill="#0903cc"/><rect x="680.28" y="643.84" width="5.44" height="5.44" fill="#6003c9"/><rect x="685.42" y="643.84" width="5.44" height="5.44" fill="#c6069f"/><rect x="690.55" y="643.84" width="5.44" height="5.44" fill="#f0754b"/><rect x="695.69" y="643.84" width="5.44" height="5.44" fill="#f3cc15"/><rect x="700.82" y="643.84" width="5.44" height="5.44" fill="#f3db15"/><rect x="705.96" y="643.84" width="5.44" height="5.44" fill="#f08a39"/><rect x="711.09" y="643.84" width="5.44" height="5.44" fill="#e71290"/><rect x="716.23" y="643.84" width="5.44" height="5.44" fill="#7e03ba"/><rect x="721.36" y="643.84" width="5.44" height="5.44" fill="#1e03db"/><rect x="726.50" y="643.84" width="5.44" height="5.44" fill="#030399"/><rect x="731.64" y="643.84" width="5.44" height="5.44" fill="#030366"/><rect x="736.77" y="643.84" width="5.44" height="5.44" fill="#03034e"/><rect x="741.91" y="643.84" width="5.44" height="5.44" fill="#03033f"/><rect x="747.04" y="643.84" width="5.44" height="5.44" fill="#030339"/><rect x="752.18" y="643.84" width="5.44" height="5.44" fill="#030330"/><rect x="757.31" y="643.84" width="5.44" height="5.44" fill="#03032d"/><rect x="762.45" y="643.84" width="5.44" height="5.44" fill="#03032a"/><rect x="767.58" y="643.84" width="5.44" height="5.44" fill="#030327"/><rect x="772.72" y="643.84" width="5.44" height="5.44" fill="#030324"/><rect x="777.85" y="643.84" width="15.71" height="5.44" fill="#030321"/><rect x="793.26" y="643.84" width="15.71" height="5.44" fill="#03031e"/><rect x="808.66" y="643.84" width="25.98" height="5.44" fill="#03031b"/><rect x="834.34" y="643.84" width="20.84" height="5.44" fill="#030318"/><rect x="854.88" y="643.84" width="61.92" height="5.44" fill="#03030f"/><rect x="536.50" y="648.97" width="51.65" height="5.44" fill="#03030f"/><rect x="587.85" y="648.97" width="51.65" height="5.44" fill="#030315"/><rect x="639.20" y="648.97" width="5.44" height="5.44" fill="#030318"/><rect x="644.34" y="648.97" width="5.44" height="5.44" fill="#03031e"/><rect x="649.47" y="648.97" width="5.44" height="5.44" fill="#030324"/><rect x="654.61" y="648.97" width="5.44" height="5.44" fill="#03032d"/><rect x="659.74" y="648.97" width="5.44" height="5.44" fill="#030339"/><rect x="664.88" y="648.97" width="5.44" height="5.44" fill="#03034b"/><rect x="670.01" y="648.97" width="5.44" height="5.44" fill="#030375"/><rect x="675.15" y="648.97" width="5.44" height="5.44" fill="#0603cc"/><rect x="680.28" y="648.97" width="5.44" height="5.44" fill="#5d03c9"/><rect x="685.42" y="648.97" width="5.44" height="5.44" fill="#c3039f"/><rect x="690.55" y="648.97" width="5.44" height="5.44" fill="#f06f51"/><rect x="695.69" y="648.97" width="5.44" height="5.44" fill="#f3c018"/><rect x="700.82" y="648.97" width="5.44" height="5.44" fill="#f3d215"/><rect x="705.96" y="648.97" width="5.44" height="5.44" fill="#f0873c"/><rect x="711.09" y="648.97" width="5.44" height="5.44" fill="#e70f90"/><rect x="716.23" y="648.97" width="5.44" height="5.44" fill="#7e03ba"/><rect x="721.36" y="648.97" width="5.44" height="5.44" fill="#1e03db"/><rect x="726.50" y="648.97" width="5.44" height="5.44" fill="#03039f"/><rect x="731.64" y="648.97" width="5.44" height="5.44" fill="#03036c"/><rect x="736.77" y="648.97" width="5.44" height="5.44" fill="#030351"/><rect x="741.91" y="648.97" width="5.44" height="5.44" fill="#030345"/><rect x="747.04" y="648.97" width="5.44" height="5.44" fill="#03033c"/><rect x="752.18" y="648.97" width="5.44" height="5.44" fill="#030336"/><rect x="757.31" y="648.97" width="5.44" height="5.44" fill="#030330"/><rect x="762.45" y="648.97" width="5.44" height="5.44" fill="#03032d"/><rect x="767.58" y="648.97" width="5.44" height="5.44" fill="#03032a"/><rect x="772.72" y="648.97" width="5.44" height="5.44" fill="#030327"/><rect x="777.85" y="648.97" width="10.57" height="5.44" fill="#030324"/><rect x="788.12" y="648.97" width="15.71" height="5.44" fill="#030321"/><rect x="803.53" y="648.97" width="20.84" height="5.44" fill="#03031e"/><rect x="824.07" y="648.97" width="25.98" height="5.44" fill="#03031b"/><rect x="849.74" y="648.97" width="10.57" height="5.44" fill="#030318"/><rect x="860.01" y="648.97" width="56.79" height="5.44" fill="#03030f"/><rect x="536.50" y="654.11" width="46.52" height="5.44" fill="#03030f"/><rect x="582.72" y="654.11" width="56.79" height="5.44" fill="#030315"/><rect x="639.20" y="654.11" width="5.44" height="5.44" fill="#030318"/><rect x="644.34" y="654.11" width="5.44" height="5.44" fill="#03031e"/><rect x="649.47" y="654.11" width="5.44" height="5.44" fill="#030324"/><rect x="654.61" y="654.11" width="5.44" height="5.44" fill="#03032d"/><rect x="659.74" y="654.11" width="5.44" height="5.44" fill="#030339"/><rect x="664.88" y="654.11" width="5.44" height="5.44" fill="#03034b"/><rect x="670.01" y="654.11" width="5.44" height="5.44" fill="#03036f"/><rect x="675.15" y="654.11" width="5.44" height="5.44" fill="#0603bd"/><rect x="680.28" y="654.11" width="5.44" height="5.44" fill="#4803cf"/><rect x="685.42" y="654.11" width="5.44" height="5.44" fill="#a503a8"/><rect x="690.55" y="654.11" width="5.44" height="5.44" fill="#ea3f72"/><rect x="695.69" y="654.11" width="5.44" height="5.44" fill="#f0843f"/><rect x="700.82" y="654.11" width="5.44" height="5.44" fill="#f08d36"/><rect x="705.96" y="654.11" width="5.44" height="5.44" fill="#f0635a"/><rect x="711.09" y="654.11" width="5.44" height="5.44" fill="#c9069c"/><rect x="716.23" y="654.11" width="5.44" height="5.44" fill="#6f03c0"/><rect x="721.36" y="654.11" width="5.44" height="5.44" fill="#1503db"/><rect x="726.50" y="654.11" width="5.44" height="5.44" fill="#03039f"/><rect x="731.64" y="654.11" width="5.44" height="5.44" fill="#03036f"/><rect x="736.77" y="654.11" width="5.44" height="5.44" fill="#030354"/><rect x="741.91" y="654.11" width="5.44" height="5.44" fill="#030348"/><rect x="747.04" y="654.11" width="5.44" height="5.44" fill="#03033f"/><rect x="752.18" y="654.11" width="5.44" height="5.44" fill="#030339"/><rect x="757.31" y="654.11" width="5.44" height="5.44" fill="#030333"/><rect x="762.45" y="654.11" width="5.44" height="5.44" fill="#030330"/><rect x="767.58" y="654.11" width="5.44" height="5.44" fill="#03032d"/><rect x="772.72" y="654.11" width="5.44" height="5.44" fill="#03032a"/><rect x="777.85" y="654.11" width="10.57" height="5.44" fill="#030327"/><rect x="788.12" y="654.11" width="10.57" height="5.44" fill="#030324"/><rect x="798.39" y="654.11" width="15.71" height="5.44" fill="#030321"/><rect x="813.80" y="654.11" width="20.84" height="5.44" fill="#03031e"/><rect x="834.34" y="654.11" width="31.11" height="5.44" fill="#03031b"/><rect x="865.15" y="654.11" width="51.65" height="5.44" fill="#03030f"/><rect x="536.50" y="659.24" width="41.38" height="5.44" fill="#03030f"/><rect x="577.58" y="659.24" width="61.92" height="5.44" fill="#030315"/><rect x="639.20" y="659.24" width="5.44" height="5.44" fill="#030318"/><rect x="644.34" y="659.24" width="5.44" height="5.44" fill="#03031e"/><rect x="649.47" y="659.24" width="5.44" height="5.44" fill="#030324"/><rect x="654.61" y="659.24" width="5.44" height="5.44" fill="#03032d"/><rect x="659.74" y="659.24" width="5.44" height="5.44" fill="#030339"/><rect x="664.88" y="659.24" width="5.44" height="5.44" fill="#030348"/><rect x="670.01" y="659.24" width="5.44" height="5.44" fill="#030366"/><rect x="675.15" y="659.24" width="5.44" height="5.44" fill="#0603a5"/><rect x="680.28" y="659.24" width="5.44" height="5.44" fill="#2703d8"/><rect x="685.42" y="659.24" width="5.44" height="5.44" fill="#7b03ba"/><rect x="690.55" y="659.24" width="5.44" height="5.44" fill="#c9069c"/><rect x="695.69" y="659.24" width="5.44" height="5.44" fill="#ea307b"/><rect x="700.82" y="659.24" width="5.44" height="5.44" fill="#ea3f72"/><rect x="705.96" y="659.24" width="5.44" height="5.44" fill="#e10996"/><rect x="711.09" y="659.24" width="5.44" height="5.44" fill="#9903ae"/><rect x="716.23" y="659.24" width="5.44" height="5.44" fill="#5103cc"/><rect x="721.36" y="659.24" width="5.44" height="5.44" fill="#0903de"/><rect x="726.50" y="659.24" width="5.44" height="5.44" fill="#030399"/><rect x="731.64" y="659.24" width="5.44" height="5.44" fill="#030372"/><rect x="736.77" y="659.24" width="5.44" height="5.44" fill="#03035a"/><rect x="741.91" y="659.24" width="5.44" height="5.44" fill="#03034e"/><rect x="747.04" y="659.24" width="5.44" height="5.44" fill="#030345"/><rect x="752.18" y="659.24" width="5.44" height="5.44" fill="#03033f"/><rect x="757.31" y="659.24" width="5.44" height="5.44" fill="#030339"/><rect x="762.45" y="659.24" width="5.44" height="5.44" fill="#030333"/><rect x="767.58" y="659.24" width="5.44" height="5.44" fill="#030330"/><rect x="772.72" y="659.24" width="5.44" height="5.44" fill="#03032d"/><rect x="777.85" y="659.24" width="5.44" height="5.44" fill="#03032a"/><rect x="782.99" y="659.24" width="10.57" height="5.44" fill="#030327"/><rect x="793.26" y="659.24" width="10.57" height="5.44" fill="#030324"/><rect x="803.53" y="659.24" width="20.84" height="5.44" fill="#030321"/><rect x="824.07" y="659.24" width="36.25" height="5.44" fill="#03031e"/><rect x="860.01" y="659.24" width="10.57" height="5.44" fill="#03031b"/><rect x="870.28" y="659.24" width="46.52" height="5.44" fill="#03030f"/><rect x="536.50" y="664.38" width="41.38" height="5.44" fill="#03030f"/><rect x="577.58" y="664.38" width="61.92" height="5.44" fill="#030315"/><rect x="639.20" y="664.38" width="5.44" height="5.44" fill="#03031b"/><rect x="644.34" y="664.38" width="5.44" height="5.44" fill="#03031e"/><rect x="649.47" y="664.38" width="5.44" height="5.44" fill="#030324"/><rect x="654.61" y="664.38" width="5.44" height="5.44" fill="#03032d"/><rect x="659.74" y="664.38" width="5.44" height="5.44" fill="#030336"/><rect x="664.88" y="664.38" width="5.44" height="5.44" fill="#030345"/><rect x="670.01" y="664.38" width="5.44" height="5.44" fill="#03035a"/><rect x="675.15" y="664.38" width="5.44" height="5.44" fill="#03038a"/><rect x="680.28" y="664.38" width="5.44" height="5.44" fill="#0903d8"/><rect x="685.42" y="664.38" width="5.44" height="5.44" fill="#4803cf"/><rect x="690.55" y="664.38" width="5.44" height="5.44" fill="#8403b7"/><rect x="695.69" y="664.38" width="5.44" height="5.44" fill="#a803a5"/><rect x="700.82" y="664.38" width="5.44" height="5.44" fill="#b103a5"/><rect x="705.96" y="664.38" width="5.44" height="5.44" fill="#9603ae"/><rect x="711.09" y="664.38" width="5.44" height="5.44" fill="#6903c3"/><rect x="716.23" y="664.38" width="5.44" height="5.44" fill="#2a03d8"/><rect x="721.36" y="664.38" width="5.44" height="5.44" fill="#0603c6"/><rect x="726.50" y="664.38" width="5.44" height="5.44" fill="#030393"/><rect x="731.64" y="664.38" width="5.44" height="5.44" fill="#030375"/><rect x="736.77" y="664.38" width="5.44" height="5.44" fill="#030360"/><rect x="741.91" y="664.38" width="5.44" height="5.44" fill="#030354"/><rect x="747.04" y="664.38" width="5.44" height="5.44" fill="#03034b"/><rect x="752.18" y="664.38" width="5.44" height="5.44" fill="#030342"/><rect x="757.31" y="664.38" width="5.44" height="5.44" fill="#03033c"/><rect x="762.45" y="664.38" width="5.44" height="5.44" fill="#030339"/><rect x="767.58" y="664.38" width="5.44" height="5.44" fill="#030333"/><rect x="772.72" y="664.38" width="5.44" height="5.44" fill="#030330"/><rect x="777.85" y="664.38" width="5.44" height="5.44" fill="#03032d"/><rect x="782.99" y="664.38" width="10.57" height="5.44" fill="#03032a"/><rect x="793.26" y="664.38" width="10.57" height="5.44" fill="#030327"/><rect x="803.53" y="664.38" width="10.57" height="5.44" fill="#030324"/><rect x="813.80" y="664.38" width="31.11" height="5.44" fill="#030321"/><rect x="844.61" y="664.38" width="25.98" height="5.44" fill="#03031e"/><rect x="870.28" y="664.38" width="46.52" height="5.44" fill="#03030f"/><rect x="536.50" y="669.51" width="36.25" height="5.44" fill="#03030f"/><rect x="572.45" y="669.51" width="61.92" height="5.44" fill="#030315"/><rect x="634.07" y="669.51" width="5.44" height="5.44" fill="#030318"/><rect x="639.20" y="669.51" width="5.44" height="5.44" fill="#03031b"/><rect x="644.34" y="669.51" width="5.44" height="5.44" fill="#03031e"/><rect x="649.47" y="669.51" width="5.44" height="5.44" fill="#030324"/><rect x="654.61" y="669.51" width="5.44" height="5.44" fill="#03032a"/><rect x="659.74" y="669.51" width="5.44" height="5.44" fill="#030333"/><rect x="664.88" y="669.51" width="5.44" height="5.44" fill="#03033f"/><rect x="670.01" y="669.51" width="5.44" height="5.44" fill="#030351"/><rect x="675.15" y="669.51" width="5.44" height="5.44" fill="#030372"/><rect x="680.28" y="669.51" width="5.44" height="5.44" fill="#0603a8"/><rect x="685.42" y="669.51" width="5.44" height="5.44" fill="#1203de"/><rect x="690.55" y="669.51" width="5.44" height="5.44" fill="#4203cf"/><rect x="695.69" y="669.51" width="5.44" height="5.44" fill="#6603c6"/><rect x="700.82" y="669.51" width="5.44" height="5.44" fill="#6c03c3"/><rect x="705.96" y="669.51" width="5.44" height="5.44" fill="#5a03c9"/><rect x="711.09" y="669.51" width="5.44" height="5.44" fill="#3303d5"/><rect x="716.23" y="669.51" width="5.44" height="5.44" fill="#0c03de"/><rect x="721.36" y="669.51" width="5.44" height="5.44" fill="#0603b4"/><rect x="726.50" y="669.51" width="5.44" height="5.44" fill="#030393"/><rect x="731.64" y="669.51" width="5.44" height="5.44" fill="#03037b"/><rect x="736.77" y="669.51" width="5.44" height="5.44" fill="#030369"/><rect x="741.91" y="669.51" width="5.44" height="5.44" fill="#03035a"/><rect x="747.04" y="669.51" width="5.44" height="5.44" fill="#030351"/><rect x="752.18" y="669.51" width="5.44" height="5.44" fill="#03034b"/><rect x="757.31" y="669.51" width="5.44" height="5.44" fill="#030342"/><rect x="762.45" y="669.51" width="5.44" height="5.44" fill="#03033c"/><rect x="767.58" y="669.51" width="5.44" height="5.44" fill="#030339"/><rect x="772.72" y="669.51" width="5.44" height="5.44" fill="#030333"/><rect x="777.85" y="669.51" width="5.44" height="5.44" fill="#030330"/><rect x="782.99" y="669.51" width="5.44" height="5.44" fill="#03032d"/><rect x="788.12" y="669.51" width="10.57" height="5.44" fill="#03032a"/><rect x="798.39" y="669.51" width="10.57" height="5.44" fill="#030327"/><rect x="808.66" y="669.51" width="20.84" height="5.44" fill="#030324"/><rect x="829.20" y="669.51" width="41.38" height="5.44" fill="#030321"/><rect x="870.28" y="669.51" width="5.44" height="5.44" fill="#03031e"/><rect x="875.42" y="669.51" width="41.38" height="5.44" fill="#03030f"/><rect x="536.50" y="674.65" width="31.11" height="5.44" fill="#03030f"/><rect x="567.31" y="674.65" width="67.06" height="5.44" fill="#030315"/><rect x="634.07" y="674.65" width="5.44" height="5.44" fill="#030318"/><rect x="639.20" y="674.65" width="5.44" height="5.44" fill="#03031b"/><rect x="644.34" y="674.65" width="5.44" height="5.44" fill="#03031e"/><rect x="649.47" y="674.65" width="5.44" height="5.44" fill="#030324"/><rect x="654.61" y="674.65" width="5.44" height="5.44" fill="#03032a"/><rect x="659.74" y="674.65" width="5.44" height="5.44" fill="#030333"/><rect x="664.88" y="674.65" width="5.44" height="5.44" fill="#03033c"/><rect x="670.01" y="674.65" width="5.44" height="5.44" fill="#03034b"/><rect x="675.15" y="674.65" width="5.44" height="5.44" fill="#030360"/><rect x="680.28" y="674.65" width="5.44" height="5.44" fill="#030384"/><rect x="685.42" y="674.65" width="5.44" height="5.44" fill="#0603b1"/><rect x="690.55" y="674.65" width="5.44" height="5.44" fill="#0903e1"/><rect x="695.69" y="674.65" width="5.44" height="5.44" fill="#2103d8"/><rect x="700.82" y="674.65" width="5.44" height="5.44" fill="#2a03d8"/><rect x="705.96" y="674.65" width="5.44" height="5.44" fill="#2103db"/><rect x="711.09" y="674.65" width="5.44" height="5.44" fill="#0c03de"/><rect x="716.23" y="674.65" width="5.44" height="5.44" fill="#0603c6"/><rect x="721.36" y="674.65" width="5.44" height="5.44" fill="#0603ab"/><rect x="726.50" y="674.65" width="5.44" height="5.44" fill="#030393"/><rect x="731.64" y="674.65" width="5.44" height="5.44" fill="#030384"/><rect x="736.77" y="674.65" width="5.44" height="5.44" fill="#030375"/><rect x="741.91" y="674.65" width="5.44" height="5.44" fill="#030366"/><rect x="747.04" y="674.65" width="5.44" height="5.44" fill="#03035a"/><rect x="752.18" y="674.65" width="5.44" height="5.44" fill="#030351"/><rect x="757.31" y="674.65" width="5.44" height="5.44" fill="#03034b"/><rect x="762.45" y="674.65" width="5.44" height="5.44" fill="#030342"/><rect x="767.58" y="674.65" width="5.44" height="5.44" fill="#03033f"/><rect x="772.72" y="674.65" width="5.44" height="5.44" fill="#030339"/><rect x="777.85" y="674.65" width="5.44" height="5.44" fill="#030336"/><rect x="782.99" y="674.65" width="5.44" height="5.44" fill="#030330"/><rect x="788.12" y="674.65" width="10.57" height="5.44" fill="#03032d"/><rect x="798.39" y="674.65" width="5.44" height="5.44" fill="#03032a"/><rect x="803.53" y="674.65" width="15.71" height="5.44" fill="#030327"/><rect x="818.93" y="674.65" width="46.52" height="5.44" fill="#030324"/><rect x="865.15" y="674.65" width="15.71" height="5.44" fill="#030321"/><rect x="880.55" y="674.65" width="36.25" height="5.44" fill="#03030f"/><rect x="536.50" y="679.78" width="31.11" height="5.44" fill="#03030f"/><rect x="567.31" y="679.78" width="67.06" height="5.44" fill="#030315"/><rect x="634.07" y="679.78" width="5.44" height="5.44" fill="#030318"/><rect x="639.20" y="679.78" width="5.44" height="5.44" fill="#03031b"/><rect x="644.34" y="679.78" width="5.44" height="5.44" fill="#03031e"/><rect x="649.47" y="679.78" width="5.44" height="5.44" fill="#030324"/><rect x="654.61" y="679.78" width="5.44" height="5.44" fill="#03032a"/><rect x="659.74" y="679.78" width="5.44" height="5.44" fill="#030330"/><rect x="664.88" y="679.78" width="5.44" height="5.44" fill="#030339"/><rect x="670.01" y="679.78" width="5.44" height="5.44" fill="#030345"/><rect x="675.15" y="679.78" width="5.44" height="5.44" fill="#030354"/><rect x="680.28" y="679.78" width="5.44" height="5.44" fill="#03036c"/><rect x="685.42" y="679.78" width="5.44" height="5.44" fill="#03038d"/><rect x="690.55" y="679.78" width="5.44" height="5.44" fill="#0603ab"/><rect x="695.69" y="679.78" width="5.44" height="5.44" fill="#0603c3"/><rect x="700.82" y="679.78" width="10.57" height="5.44" fill="#0903cf"/><rect x="711.09" y="679.78" width="5.44" height="5.44" fill="#0603c6"/><rect x="716.23" y="679.78" width="5.44" height="5.44" fill="#0603b7"/><rect x="721.36" y="679.78" width="5.44" height="5.44" fill="#0603a8"/><rect x="726.50" y="679.78" width="5.44" height="5.44" fill="#03039c"/><rect x="731.64" y="679.78" width="5.44" height="5.44" fill="#030390"/><rect x="736.77" y="679.78" width="5.44" height="5.44" fill="#030381"/><rect x="741.91" y="679.78" width="5.44" height="5.44" fill="#030375"/><rect x="747.04" y="679.78" width="5.44" height="5.44" fill="#030366"/><rect x="752.18" y="679.78" width="5.44" height="5.44" fill="#03035a"/><rect x="757.31" y="679.78" width="5.44" height="5.44" fill="#030351"/><rect x="762.45" y="679.78" width="5.44" height="5.44" fill="#03034b"/><rect x="767.58" y="679.78" width="5.44" height="5.44" fill="#030342"/><rect x="772.72" y="679.78" width="5.44" height="5.44" fill="#03033c"/><rect x="777.85" y="679.78" width="5.44" height="5.44" fill="#030339"/><rect x="782.99" y="679.78" width="5.44" height="5.44" fill="#030333"/><rect x="788.12" y="679.78" width="5.44" height="5.44" fill="#030330"/><rect x="793.26" y="679.78" width="10.57" height="5.44" fill="#03032d"/><rect x="803.53" y="679.78" width="10.57" height="5.44" fill="#03032a"/><rect x="813.80" y="679.78" width="46.52" height="5.44" fill="#030327"/><rect x="860.01" y="679.78" width="20.84" height="5.44" fill="#030324"/><rect x="880.55" y="679.78" width="36.25" height="5.44" fill="#03030f"/><rect x="536.50" y="684.92" width="25.98" height="5.44" fill="#03030f"/><rect x="562.18" y="684.92" width="72.19" height="5.44" fill="#030315"/><rect x="634.07" y="684.92" width="5.44" height="5.44" fill="#030318"/><rect x="639.20" y="684.92" width="5.44" height="5.44" fill="#03031b"/><rect x="644.34" y="684.92" width="5.44" height="5.44" fill="#03031e"/><rect x="649.47" y="684.92" width="5.44" height="5.44" fill="#030321"/><rect x="654.61" y="684.92" width="5.44" height="5.44" fill="#030327"/><rect x="659.74" y="684.92" width="5.44" height="5.44" fill="#030330"/><rect x="664.88" y="684.92" width="5.44" height="5.44" fill="#030339"/><rect x="670.01" y="684.92" width="5.44" height="5.44" fill="#030342"/><rect x="675.15" y="684.92" width="5.44" height="5.44" fill="#03034e"/><rect x="680.28" y="684.92" width="5.44" height="5.44" fill="#030360"/><rect x="685.42" y="684.92" width="5.44" height="5.44" fill="#030375"/><rect x="690.55" y="684.92" width="5.44" height="5.44" fill="#03038d"/><rect x="695.69" y="684.92" width="5.44" height="5.44" fill="#0303a2"/><rect x="700.82" y="684.92" width="5.44" height="5.44" fill="#0603b1"/><rect x="705.96" y="684.92" width="5.44" height="5.44" fill="#0603b7"/><rect x="711.09" y="684.92" width="5.44" height="5.44" fill="#0603ba"/><rect x="716.23" y="684.92" width="5.44" height="5.44" fill="#0603b7"/><rect x="721.36" y="684.92" width="5.44" height="5.44" fill="#0603b4"/><rect x="726.50" y="684.92" width="5.44" height="5.44" fill="#0603ab"/><rect x="731.64" y="684.92" width="5.44" height="5.44" fill="#0303a2"/><rect x="736.77" y="684.92" width="5.44" height="5.44" fill="#030396"/><rect x="741.91" y="684.92" width="5.44" height="5.44" fill="#030387"/><rect x="747.04" y="684.92" width="5.44" height="5.44" fill="#030375"/><rect x="752.18" y="684.92" width="5.44" height="5.44" fill="#030366"/><rect x="757.31" y="684.92" width="5.44" height="5.44" fill="#03035a"/><rect x="762.45" y="684.92" width="5.44" height="5.44" fill="#030351"/><rect x="767.58" y="684.92" width="5.44" height="5.44" fill="#030348"/><rect x="772.72" y="684.92" width="5.44" height="5.44" fill="#030342"/><rect x="777.85" y="684.92" width="5.44" height="5.44" fill="#03033c"/><rect x="782.99" y="684.92" width="5.44" height="5.44" fill="#030336"/><rect x="788.12" y="684.92" width="5.44" height="5.44" fill="#030333"/><rect x="793.26" y="684.92" width="5.44" height="5.44" fill="#030330"/><rect x="798.39" y="684.92" width="10.57" height="5.44" fill="#03032d"/><rect x="808.66" y="684.92" width="10.57" height="5.44" fill="#03032a"/><rect x="818.93" y="684.92" width="61.92" height="5.44" fill="#030327"/><rect x="880.55" y="684.92" width="5.44" height="5.44" fill="#030324"/><rect x="885.69" y="684.92" width="31.11" height="5.44" fill="#03030f"/><rect x="536.50" y="690.05" width="20.84" height="5.44" fill="#03030f"/><rect x="557.04" y="690.05" width="77.33" height="5.44" fill="#030315"/><rect x="634.07" y="690.05" width="5.44" height="5.44" fill="#030318"/><rect x="639.20" y="690.05" width="5.44" height="5.44" fill="#03031b"/><rect x="644.34" y="690.05" width="5.44" height="5.44" fill="#03031e"/><rect x="649.47" y="690.05" width="5.44" height="5.44" fill="#030321"/><rect x="654.61" y="690.05" width="5.44" height="5.44" fill="#030327"/><rect x="659.74" y="690.05" width="5.44" height="5.44" fill="#03032d"/><rect x="664.88" y="690.05" width="5.44" height="5.44" fill="#030336"/><rect x="670.01" y="690.05" width="5.44" height="5.44" fill="#03033f"/><rect x="675.15" y="690.05" width="5.44" height="5.44" fill="#03034b"/><rect x="680.28" y="690.05" width="5.44" height="5.44" fill="#030357"/><rect x="685.42" y="690.05" width="5.44" height="5.44" fill="#03036c"/><rect x="690.55" y="690.05" width="5.44" height="5.44" fill="#03037e"/><rect x="695.69" y="690.05" width="5.44" height="5.44" fill="#030393"/><rect x="700.82" y="690.05" width="5.44" height="5.44" fill="#0603a5"/><rect x="705.96" y="690.05" width="5.44" height="5.44" fill="#0603b1"/><rect x="711.09" y="690.05" width="5.44" height="5.44" fill="#0603c0"/><rect x="716.23" y="690.05" width="5.44" height="5.44" fill="#0603c9"/><rect x="721.36" y="690.05" width="5.44" height="5.44" fill="#0903cf"/><rect x="726.50" y="690.05" width="5.44" height="5.44" fill="#0903cc"/><rect x="731.64" y="690.05" width="5.44" height="5.44" fill="#0603c3"/><rect x="736.77" y="690.05" width="5.44" height="5.44" fill="#0603b4"/><rect x="741.91" y="690.05" width="5.44" height="5.44" fill="#03039f"/><rect x="747.04" y="690.05" width="5.44" height="5.44" fill="#03038a"/><rect x="752.18" y="690.05" width="5.44" height="5.44" fill="#030378"/><rect x="757.31" y="690.05" width="5.44" height="5.44" fill="#030366"/><rect x="762.45" y="690.05" width="5.44" height="5.44" fill="#030357"/><rect x="767.58" y="690.05" width="5.44" height="5.44" fill="#03034e"/><rect x="772.72" y="690.05" width="5.44" height="5.44" fill="#030348"/><rect x="777.85" y="690.05" width="5.44" height="5.44" fill="#03033f"/><rect x="782.99" y="690.05" width="5.44" height="5.44" fill="#03033c"/><rect x="788.12" y="690.05" width="5.44" height="5.44" fill="#030336"/><rect x="793.26" y="690.05" width="5.44" height="5.44" fill="#030333"/><rect x="798.39" y="690.05" width="5.44" height="5.44" fill="#030330"/><rect x="803.53" y="690.05" width="10.57" height="5.44" fill="#03032d"/><rect x="813.80" y="690.05" width="61.92" height="5.44" fill="#03032a"/><rect x="875.42" y="690.05" width="10.57" height="5.44" fill="#030327"/><rect x="885.69" y="690.05" width="5.44" height="5.44" fill="#030324"/><rect x="890.82" y="690.05" width="25.98" height="5.44" fill="#03030f"/><rect x="536.50" y="695.19" width="20.84" height="5.44" fill="#03030f"/><rect x="557.04" y="695.19" width="77.33" height="5.44" fill="#030315"/><rect x="634.07" y="695.19" width="5.44" height="5.44" fill="#030318"/><rect x="639.20" y="695.19" width="5.44" height="5.44" fill="#03031b"/><rect x="644.34" y="695.19" width="5.44" height="5.44" fill="#03031e"/><rect x="649.47" y="695.19" width="5.44" height="5.44" fill="#030321"/><rect x="654.61" y="695.19" width="5.44" height="5.44" fill="#030327"/><rect x="659.74" y="695.19" width="5.44" height="5.44" fill="#03032d"/><rect x="664.88" y="695.19" width="5.44" height="5.44" fill="#030336"/><rect x="670.01" y="695.19" width="5.44" height="5.44" fill="#03033f"/><rect x="675.15" y="695.19" width="5.44" height="5.44" fill="#030348"/><rect x="680.28" y="695.19" width="5.44" height="5.44" fill="#030354"/><rect x="685.42" y="695.19" width="5.44" height="5.44" fill="#030366"/><rect x="690.55" y="695.19" width="5.44" height="5.44" fill="#03037b"/><rect x="695.69" y="695.19" width="5.44" height="5.44" fill="#030390"/><rect x="700.82" y="695.19" width="5.44" height="5.44" fill="#0603a5"/><rect x="705.96" y="695.19" width="5.44" height="5.44" fill="#0603bd"/><rect x="711.09" y="695.19" width="5.44" height="5.44" fill="#0903d8"/><rect x="716.23" y="695.19" width="5.44" height="5.44" fill="#1503de"/><rect x="721.36" y="695.19" width="5.44" height="5.44" fill="#2403d8"/><rect x="726.50" y="695.19" width="5.44" height="5.44" fill="#2703d8"/><rect x="731.64" y="695.19" width="5.44" height="5.44" fill="#1e03db"/><rect x="736.77" y="695.19" width="5.44" height="5.44" fill="#0f03de"/><rect x="741.91" y="695.19" width="5.44" height="5.44" fill="#0603c6"/><rect x="747.04" y="695.19" width="5.44" height="5.44" fill="#0603a5"/><rect x="752.18" y="695.19" width="5.44" height="5.44" fill="#03038a"/><rect x="757.31" y="695.19" width="5.44" height="5.44" fill="#030375"/><rect x="762.45" y="695.19" width="5.44" height="5.44" fill="#030363"/><rect x="767.58" y="695.19" width="5.44" height="5.44" fill="#030354"/><rect x="772.72" y="695.19" width="5.44" height="5.44" fill="#03034b"/><rect x="777.85" y="695.19" width="5.44" height="5.44" fill="#030345"/><rect x="782.99" y="695.19" width="5.44" height="5.44" fill="#03033f"/><rect x="788.12" y="695.19" width="5.44" height="5.44" fill="#030339"/><rect x="793.26" y="695.19" width="5.44" height="5.44" fill="#030336"/><rect x="798.39" y="695.19" width="5.44" height="5.44" fill="#030333"/><rect x="803.53" y="695.19" width="5.44" height="5.44" fill="#030330"/><rect x="808.66" y="695.19" width="15.71" height="5.44" fill="#03032d"/><rect x="824.07" y="695.19" width="15.71" height="5.44" fill="#03032a"/><rect x="839.47" y="695.19" width="36.25" height="5.44" fill="#03032d"/><rect x="875.42" y="695.19" width="10.57" height="5.44" fill="#03032a"/><rect x="885.69" y="695.19" width="5.44" height="5.44" fill="#030327"/><rect x="890.82" y="695.19" width="25.98" height="5.44" fill="#03030f"/><rect x="536.50" y="700.32" width="15.71" height="5.44" fill="#03030f"/><rect x="551.91" y="700.32" width="82.46" height="5.44" fill="#030315"/><rect x="634.07" y="700.32" width="5.44" height="5.44" fill="#030318"/><rect x="639.20" y="700.32" width="5.44" height="5.44" fill="#03031b"/><rect x="644.34" y="700.32" width="5.44" height="5.44" fill="#03031e"/><rect x="649.47" y="700.32" width="5.44" height="5.44" fill="#030321"/><rect x="654.61" y="700.32" width="5.44" height="5.44" fill="#030327"/><rect x="659.74" y="700.32" width="5.44" height="5.44" fill="#03032d"/><rect x="664.88" y="700.32" width="5.44" height="5.44" fill="#030333"/><rect x="670.01" y="700.32" width="5.44" height="5.44" fill="#03033c"/><rect x="675.15" y="700.32" width="5.44" height="5.44" fill="#030348"/><rect x="680.28" y="700.32" width="5.44" height="5.44" fill="#030354"/><rect x="685.42" y="700.32" width="5.44" height="5.44" fill="#030363"/><rect x="690.55" y="700.32" width="5.44" height="5.44" fill="#030378"/><rect x="695.69" y="700.32" width="5.44" height="5.44" fill="#030393"/><rect x="700.82" y="700.32" width="5.44" height="5.44" fill="#0603b1"/><rect x="705.96" y="700.32" width="5.44" height="5.44" fill="#0903d8"/><rect x="711.09" y="700.32" width="5.44" height="5.44" fill="#2703d8"/><rect x="716.23" y="700.32" width="5.44" height="5.44" fill="#4b03cf"/><rect x="721.36" y="700.32" width="5.44" height="5.44" fill="#6603c6"/><rect x="726.50" y="700.32" width="5.44" height="5.44" fill="#6f03c0"/><rect x="731.64" y="700.32" width="5.44" height="5.44" fill="#6603c6"/><rect x="736.77" y="700.32" width="5.44" height="5.44" fill="#4b03cf"/><rect x="741.91" y="700.32" width="5.44" height="5.44" fill="#2103d8"/><rect x="747.04" y="700.32" width="5.44" height="5.44" fill="#0903cf"/><rect x="752.18" y="700.32" width="5.44" height="5.44" fill="#0603a5"/><rect x="757.31" y="700.32" width="5.44" height="5.44" fill="#030384"/><rect x="762.45" y="700.32" width="5.44" height="5.44" fill="#03036f"/><rect x="767.58" y="700.32" width="5.44" height="5.44" fill="#03035d"/><rect x="772.72" y="700.32" width="5.44" height="5.44" fill="#030351"/><rect x="777.85" y="700.32" width="5.44" height="5.44" fill="#030348"/><rect x="782.99" y="700.32" width="5.44" height="5.44" fill="#030342"/><rect x="788.12" y="700.32" width="5.44" height="5.44" fill="#03033c"/><rect x="793.26" y="700.32" width="5.44" height="5.44" fill="#030336"/><rect x="798.39" y="700.32" width="5.44" height="5.44" fill="#030333"/><rect x="803.53" y="700.32" width="10.57" height="5.44" fill="#030330"/><rect x="813.80" y="700.32" width="36.25" height="5.44" fill="#03032d"/><rect x="849.74" y="700.32" width="20.84" height="5.44" fill="#030330"/><rect x="870.28" y="700.32" width="10.57" height="5.44" fill="#03032d"/><rect x="880.55" y="700.32" width="10.57" height="5.44" fill="#03032a"/><rect x="890.82" y="700.32" width="5.44" height="5.44" fill="#030327"/><rect x="895.96" y="700.32" width="20.84" height="5.44" fill="#03030f"/><rect x="536.50" y="705.46" width="10.57" height="5.44" fill="#03030f"/><rect x="546.77" y="705.46" width="82.46" height="5.44" fill="#030315"/><rect x="628.93" y="705.46" width="10.57" height="5.44" fill="#030318"/><rect x="639.20" y="705.46" width="5.44" height="5.44" fill="#03031b"/><rect x="644.34" y="705.46" width="5.44" height="5.44" fill="#03031e"/><rect x="649.47" y="705.46" width="5.44" height="5.44" fill="#030321"/><rect x="654.61" y="705.46" width="5.44" height="5.44" fill="#030327"/><rect x="659.74" y="705.46" width="5.44" height="5.44" fill="#03032d"/><rect x="664.88" y="705.46" width="5.44" height="5.44" fill="#030333"/><rect x="670.01" y="705.46" width="5.44" height="5.44" fill="#03033c"/><rect x="675.15" y="705.46" width="5.44" height="5.44" fill="#030345"/><rect x="680.28" y="705.46" width="5.44" height="5.44" fill="#030351"/><rect x="685.42" y="705.46" width="5.44" height="5.44" fill="#030363"/><rect x="690.55" y="705.46" width="5.44" height="5.44" fill="#03037b"/><rect x="695.69" y="705.46" width="5.44" height="5.44" fill="#030399"/><rect x="700.82" y="705.46" width="5.44" height="5.44" fill="#0603c6"/><rect x="705.96" y="705.46" width="5.44" height="5.44" fill="#2103d8"/><rect x="711.09" y="705.46" width="5.44" height="5.44" fill="#5d03c9"/><rect x="716.23" y="705.46" width="5.44" height="5.44" fill="#8d03b1"/><rect x="721.36" y="705.46" width="5.44" height="5.44" fill="#b703a2"/><rect x="726.50" y="705.46" width="5.44" height="5.44" fill="#cc069c"/><rect x="731.64" y="705.46" width="5.44" height="5.44" fill="#ba03a2"/><rect x="736.77" y="705.46" width="5.44" height="5.44" fill="#9303b1"/><rect x="741.91" y="705.46" width="5.44" height="5.44" fill="#6303c6"/><rect x="747.04" y="705.46" width="5.44" height="5.44" fill="#2403d8"/><rect x="752.18" y="705.46" width="5.44" height="5.44" fill="#0603c6"/><rect x="757.31" y="705.46" width="5.44" height="5.44" fill="#030399"/><rect x="762.45" y="705.46" width="5.44" height="5.44" fill="#03037b"/><rect x="767.58" y="705.46" width="5.44" height="5.44" fill="#030363"/><rect x="772.72" y="705.46" width="5.44" height="5.44" fill="#030354"/><rect x="777.85" y="705.46" width="5.44" height="5.44" fill="#03034b"/><rect x="782.99" y="705.46" width="5.44" height="5.44" fill="#030342"/><rect x="788.12" y="705.46" width="5.44" height="5.44" fill="#03033c"/><rect x="793.26" y="705.46" width="5.44" height="5.44" fill="#030339"/><rect x="798.39" y="705.46" width="5.44" height="5.44" fill="#030336"/><rect x="803.53" y="705.46" width="5.44" height="5.44" fill="#030333"/><rect x="808.66" y="705.46" width="10.57" height="5.44" fill="#030330"/><rect x="818.93" y="705.46" width="20.84" height="5.44" fill="#03032d"/><rect x="839.47" y="705.46" width="41.38" height="5.44" fill="#030330"/><rect x="880.55" y="705.46" width="5.44" height="5.44" fill="#03032d"/><rect x="885.69" y="705.46" width="10.57" height="5.44" fill="#03032a"/><rect x="895.96" y="705.46" width="5.44" height="5.44" fill="#030327"/><rect x="901.09" y="705.46" width="15.71" height="5.44" fill="#03030f"/><rect x="536.50" y="710.59" width="10.57" height="5.44" fill="#03030f"/><rect x="546.77" y="710.59" width="82.46" height="5.44" fill="#030315"/><rect x="628.93" y="710.59" width="10.57" height="5.44" fill="#030318"/><rect x="639.20" y="710.59" width="5.44" height="5.44" fill="#03031b"/><rect x="644.34" y="710.59" width="5.44" height="5.44" fill="#03031e"/><rect x="649.47" y="710.59" width="5.44" height="5.44" fill="#030321"/><rect x="654.61" y="710.59" width="5.44" height="5.44" fill="#030327"/><rect x="659.74" y="710.59" width="5.44" height="5.44" fill="#03032d"/><rect x="664.88" y="710.59" width="5.44" height="5.44" fill="#030333"/><rect x="670.01" y="710.59" width="5.44" height="5.44" fill="#03033c"/><rect x="675.15" y="710.59" width="5.44" height="5.44" fill="#030345"/><rect x="680.28" y="710.59" width="5.44" height="5.44" fill="#030351"/><rect x="685.42" y="710.59" width="5.44" height="5.44" fill="#030366"/><rect x="690.55" y="710.59" width="5.44" height="5.44" fill="#030381"/><rect x="695.69" y="710.59" width="5.44" height="5.44" fill="#0603a5"/><rect x="700.82" y="710.59" width="5.44" height="5.44" fill="#0903e1"/><rect x="705.96" y="710.59" width="5.44" height="5.44" fill="#4b03cf"/><rect x="711.09" y="710.59" width="5.44" height="5.44" fill="#9003b1"/><rect x="716.23" y="710.59" width="5.44" height="5.44" fill="#e40993"/><rect x="721.36" y="710.59" width="5.44" height="5.44" fill="#f06954"/><rect x="726.50" y="710.59" width="5.44" height="5.44" fill="#f07e42"/><rect x="731.64" y="710.59" width="5.44" height="5.44" fill="#f06f51"/><rect x="736.77" y="710.59" width="5.44" height="5.44" fill="#e71b8a"/><rect x="741.91" y="710.59" width="5.44" height="5.44" fill="#9c03ab"/><rect x="747.04" y="710.59" width="5.44" height="5.44" fill="#5403cc"/><rect x="752.18" y="710.59" width="5.44" height="5.44" fill="#0f03de"/><rect x="757.31" y="710.59" width="5.44" height="5.44" fill="#0603ab"/><rect x="762.45" y="710.59" width="5.44" height="5.44" fill="#030384"/><rect x="767.58" y="710.59" width="5.44" height="5.44" fill="#03036c"/><rect x="772.72" y="710.59" width="5.44" height="5.44" fill="#030357"/><rect x="777.85" y="710.59" width="5.44" height="5.44" fill="#03034e"/><rect x="782.99" y="710.59" width="5.44" height="5.44" fill="#030345"/><rect x="788.12" y="710.59" width="5.44" height="5.44" fill="#03033f"/><rect x="793.26" y="710.59" width="5.44" height="5.44" fill="#030339"/><rect x="798.39" y="710.59" width="5.44" height="5.44" fill="#030336"/><rect x="803.53" y="710.59" width="5.44" height="5.44" fill="#030333"/><rect x="808.66" y="710.59" width="41.38" height="5.44" fill="#030330"/><rect x="849.74" y="710.59" width="25.98" height="5.44" fill="#030333"/><rect x="875.42" y="710.59" width="10.57" height="5.44" fill="#030330"/><rect x="885.69" y="710.59" width="5.44" height="5.44" fill="#03032d"/><rect x="890.82" y="710.59" width="5.44" height="5.44" fill="#03032a"/><rect x="895.96" y="710.59" width="5.44" height="5.44" fill="#030327"/><rect x="901.09" y="710.59" width="15.71" height="5.44" fill="#03030f"/><rect x="536.50" y="715.73" width="10.57" height="5.44" fill="#03030f"/><rect x="546.77" y="715.73" width="82.46" height="5.44" fill="#030315"/><rect x="628.93" y="715.73" width="10.57" height="5.44" fill="#030318"/><rect x="639.20" y="715.73" width="5.44" height="5.44" fill="#03031b"/><rect x="644.34" y="715.73" width="5.44" height="5.44" fill="#03031e"/><rect x="649.47" y="715.73" width="5.44" height="5.44" fill="#030321"/><rect x="654.61" y="715.73" width="5.44" height="5.44" fill="#030327"/><rect x="659.74" y="715.73" width="5.44" height="5.44" fill="#03032d"/><rect x="664.88" y="715.73" width="5.44" height="5.44" fill="#030333"/><rect x="670.01" y="715.73" width="5.44" height="5.44" fill="#03033c"/><rect x="675.15" y="715.73" width="5.44" height="5.44" fill="#030345"/><rect x="680.28" y="715.73" width="5.44" height="5.44" fill="#030354"/><rect x="685.42" y="715.73" width="5.44" height="5.44" fill="#030366"/><rect x="690.55" y="715.73" width="5.44" height="5.44" fill="#030384"/><rect x="695.69" y="715.73" width="5.44" height="5.44" fill="#0603b1"/><rect x="700.82" y="715.73" width="5.44" height="5.44" fill="#1e03db"/><rect x="705.96" y="715.73" width="5.44" height="5.44" fill="#6f03c0"/><rect x="711.09" y="715.73" width="5.44" height="5.44" fill="#cc069c"/><rect x="716.23" y="715.73" width="5.44" height="5.44" fill="#f07848"/><rect x="721.36" y="715.73" width="5.44" height="5.44" fill="#f3ed15"/><rect x="726.50" y="715.73" width="5.44" height="5.44" fill="#f6f65d"/><rect x="731.64" y="715.73" width="5.44" height="5.44" fill="#f6f018"/><rect x="736.77" y="715.73" width="5.44" height="5.44" fill="#f0873c"/><rect x="741.91" y="715.73" width="5.44" height="5.44" fill="#e10996"/><rect x="747.04" y="715.73" width="5.44" height="5.44" fill="#7b03ba"/><rect x="752.18" y="715.73" width="5.44" height="5.44" fill="#2a03d8"/><rect x="757.31" y="715.73" width="5.44" height="5.44" fill="#0603bd"/><rect x="762.45" y="715.73" width="5.44" height="5.44" fill="#03038d"/><rect x="767.58" y="715.73" width="5.44" height="5.44" fill="#030372"/><rect x="772.72" y="715.73" width="5.44" height="5.44" fill="#03035d"/><rect x="777.85" y="715.73" width="5.44" height="5.44" fill="#030351"/><rect x="782.99" y="715.73" width="5.44" height="5.44" fill="#030348"/><rect x="788.12" y="715.73" width="5.44" height="5.44" fill="#03033f"/><rect x="793.26" y="715.73" width="5.44" height="5.44" fill="#03033c"/><rect x="798.39" y="715.73" width="5.44" height="5.44" fill="#030336"/><rect x="803.53" y="715.73" width="10.57" height="5.44" fill="#030333"/><rect x="813.80" y="715.73" width="31.11" height="5.44" fill="#030330"/><rect x="844.61" y="715.73" width="36.25" height="5.44" fill="#030333"/><rect x="880.55" y="715.73" width="5.44" height="5.44" fill="#030330"/><rect x="885.69" y="715.73" width="10.57" height="5.44" fill="#03032d"/><rect x="895.96" y="715.73" width="5.44" height="5.44" fill="#03032a"/><rect x="901.09" y="715.73" width="5.44" height="5.44" fill="#030324"/><rect x="906.23" y="715.73" width="10.57" height="5.44" fill="#03030f"/><rect x="536.50" y="720.86" width="15.71" height="5.44" fill="#03030f"/><rect x="551.91" y="720.86" width="77.33" height="5.44" fill="#030315"/><rect x="628.93" y="720.86" width="10.57" height="5.44" fill="#030318"/><rect x="639.20" y="720.86" width="5.44" height="5.44" fill="#03031b"/><rect x="644.34" y="720.86" width="5.44" height="5.44" fill="#03031e"/><rect x="649.47" y="720.86" width="5.44" height="5.44" fill="#030321"/><rect x="654.61" y="720.86" width="5.44" height="5.44" fill="#030327"/><rect x="659.74" y="720.86" width="5.44" height="5.44" fill="#03032d"/><rect x="664.88" y="720.86" width="5.44" height="5.44" fill="#030333"/><rect x="670.01" y="720.86" width="5.44" height="5.44" fill="#03033c"/><rect x="675.15" y="720.86" width="5.44" height="5.44" fill="#030345"/><rect x="680.28" y="720.86" width="5.44" height="5.44" fill="#030351"/><rect x="685.42" y="720.86" width="5.44" height="5.44" fill="#030366"/><rect x="690.55" y="720.86" width="5.44" height="5.44" fill="#030387"/><rect x="695.69" y="720.86" width="5.44" height="5.44" fill="#0603ba"/><rect x="700.82" y="720.86" width="5.44" height="5.44" fill="#2d03d5"/><rect x="705.96" y="720.86" width="5.44" height="5.44" fill="#8403b7"/><rect x="711.09" y="720.86" width="5.44" height="5.44" fill="#e72781"/><rect x="716.23" y="720.86" width="5.44" height="5.44" fill="#f3c318"/><rect x="721.36" y="720.86" width="5.44" height="5.44" fill="#fcfcbd"/><rect x="726.50" y="720.86" width="5.44" height="5.44" fill="#ffffff"/><rect x="731.64" y="720.86" width="5.44" height="5.44" fill="#fcfcd8"/><rect x="736.77" y="720.86" width="5.44" height="5.44" fill="#f3e415"/><rect x="741.91" y="720.86" width="5.44" height="5.44" fill="#ed4869"/><rect x="747.04" y="720.86" width="5.44" height="5.44" fill="#9603ae"/><rect x="752.18" y="720.86" width="5.44" height="5.44" fill="#3c03d2"/><rect x="757.31" y="720.86" width="5.44" height="5.44" fill="#0603c9"/><rect x="762.45" y="720.86" width="5.44" height="5.44" fill="#030393"/><rect x="767.58" y="720.86" width="5.44" height="5.44" fill="#030375"/><rect x="772.72" y="720.86" width="5.44" height="5.44" fill="#03035d"/><rect x="777.85" y="720.86" width="5.44" height="5.44" fill="#030351"/><rect x="782.99" y="720.86" width="5.44" height="5.44" fill="#030348"/><rect x="788.12" y="720.86" width="5.44" height="5.44" fill="#030342"/><rect x="793.26" y="720.86" width="5.44" height="5.44" fill="#03033c"/><rect x="798.39" y="720.86" width="5.44" height="5.44" fill="#030336"/><rect x="803.53" y="720.86" width="10.57" height="5.44" fill="#030333"/><rect x="813.80" y="720.86" width="25.98" height="5.44" fill="#030330"/><rect x="839.47" y="720.86" width="15.71" height="5.44" fill="#030333"/><rect x="854.88" y="720.86" width="15.71" height="5.44" fill="#030336"/><rect x="870.28" y="720.86" width="10.57" height="5.44" fill="#030333"/><rect x="880.55" y="720.86" width="10.57" height="5.44" fill="#030330"/><rect x="890.82" y="720.86" width="5.44" height="5.44" fill="#03032d"/><rect x="895.96" y="720.86" width="5.44" height="5.44" fill="#03032a"/><rect x="901.09" y="720.86" width="5.44" height="5.44" fill="#030327"/><rect x="906.23" y="720.86" width="10.57" height="5.44" fill="#03030f"/><rect x="536.50" y="726.00" width="15.71" height="5.44" fill="#03030f"/><rect x="551.91" y="726.00" width="77.33" height="5.44" fill="#030315"/><rect x="628.93" y="726.00" width="10.57" height="5.44" fill="#030318"/><rect x="639.20" y="726.00" width="5.44" height="5.44" fill="#03031b"/><rect x="644.34" y="726.00" width="5.44" height="5.44" fill="#03031e"/><rect x="649.47" y="726.00" width="5.44" height="5.44" fill="#030321"/><rect x="654.61" y="726.00" width="5.44" height="5.44" fill="#030327"/><rect x="659.74" y="726.00" width="5.44" height="5.44" fill="#03032d"/><rect x="664.88" y="726.00" width="5.44" height="5.44" fill="#030333"/><rect x="670.01" y="726.00" width="5.44" height="5.44" fill="#03033c"/><rect x="675.15" y="726.00" width="5.44" height="5.44" fill="#030345"/><rect x="680.28" y="726.00" width="5.44" height="5.44" fill="#030351"/><rect x="685.42" y="726.00" width="5.44" height="5.44" fill="#030366"/><rect x="690.55" y="726.00" width="5.44" height="5.44" fill="#030387"/><rect x="695.69" y="726.00" width="5.44" height="5.44" fill="#0603ba"/><rect x="700.82" y="726.00" width="5.44" height="5.44" fill="#3003d5"/><rect x="705.96" y="726.00" width="5.44" height="5.44" fill="#8a03b4"/><rect x="711.09" y="726.00" width="5.44" height="5.44" fill="#ea3c72"/><rect x="716.23" y="726.00" width="5.44" height="5.44" fill="#f3e415"/><rect x="721.36" y="726.00" width="5.44" height="5.44" fill="#fcfcf3"/><rect x="726.50" y="726.00" width="10.57" height="5.44" fill="#ffffff"/><rect x="736.77" y="726.00" width="5.44" height="5.44" fill="#f6f324"/><rect x="741.91" y="726.00" width="5.44" height="5.44" fill="#f0605d"/><rect x="747.04" y="726.00" width="5.44" height="5.44" fill="#9f03ab"/><rect x="752.18" y="726.00" width="5.44" height="5.44" fill="#4203cf"/><rect x="757.31" y="726.00" width="5.44" height="5.44" fill="#0903cf"/><rect x="762.45" y="726.00" width="5.44" height="5.44" fill="#030396"/><rect x="767.58" y="726.00" width="5.44" height="5.44" fill="#030375"/><rect x="772.72" y="726.00" width="5.44" height="5.44" fill="#030360"/><rect x="777.85" y="726.00" width="5.44" height="5.44" fill="#030351"/><rect x="782.99" y="726.00" width="5.44" height="5.44" fill="#030348"/><rect x="788.12" y="726.00" width="5.44" height="5.44" fill="#030342"/><rect x="793.26" y="726.00" width="5.44" height="5.44" fill="#03033c"/><rect x="798.39" y="726.00" width="5.44" height="5.44" fill="#030336"/><rect x="803.53" y="726.00" width="10.57" height="5.44" fill="#030333"/><rect x="813.80" y="726.00" width="20.84" height="5.44" fill="#030330"/><rect x="834.34" y="726.00" width="15.71" height="5.44" fill="#030333"/><rect x="849.74" y="726.00" width="25.98" height="5.44" fill="#030336"/><rect x="875.42" y="726.00" width="10.57" height="5.44" fill="#030333"/><rect x="885.69" y="726.00" width="5.44" height="5.44" fill="#030330"/><rect x="890.82" y="726.00" width="5.44" height="5.44" fill="#03032d"/><rect x="895.96" y="726.00" width="5.44" height="5.44" fill="#03032a"/><rect x="901.09" y="726.00" width="5.44" height="5.44" fill="#030327"/><rect x="906.23" y="726.00" width="10.57" height="5.44" fill="#03030f"/><rect x="536.50" y="731.14" width="20.84" height="5.44" fill="#03030f"/><rect x="557.04" y="731.14" width="72.19" height="5.44" fill="#030315"/><rect x="628.93" y="731.14" width="10.57" height="5.44" fill="#030318"/><rect x="639.20" y="731.14" width="5.44" height="5.44" fill="#03031b"/><rect x="644.34" y="731.14" width="5.44" height="5.44" fill="#03031e"/><rect x="649.47" y="731.14" width="5.44" height="5.44" fill="#030321"/><rect x="654.61" y="731.14" width="5.44" height="5.44" fill="#030327"/><rect x="659.74" y="731.14" width="5.44" height="5.44" fill="#03032a"/><rect x="664.88" y="731.14" width="5.44" height="5.44" fill="#030333"/><rect x="670.01" y="731.14" width="5.44" height="5.44" fill="#030339"/><rect x="675.15" y="731.14" width="5.44" height="5.44" fill="#030345"/><rect x="680.28" y="731.14" width="5.44" height="5.44" fill="#030351"/><rect x="685.42" y="731.14" width="5.44" height="5.44" fill="#030363"/><rect x="690.55" y="731.14" width="5.44" height="5.44" fill="#030381"/><rect x="695.69" y="731.14" width="5.44" height="5.44" fill="#0603b4"/><rect x="700.82" y="731.14" width="5.44" height="5.44" fill="#2703d8"/><rect x="705.96" y="731.14" width="5.44" height="5.44" fill="#7e03ba"/><rect x="711.09" y="731.14" width="5.44" height="5.44" fill="#e71b8a"/><rect x="716.23" y="731.14" width="5.44" height="5.44" fill="#f3b121"/><rect x="721.36" y="731.14" width="5.44" height="5.44" fill="#f9f99c"/><rect x="726.50" y="731.14" width="5.44" height="5.44" fill="#fffffc"/><rect x="731.64" y="731.14" width="5.44" height="5.44" fill="#fcfcba"/><rect x="736.77" y="731.14" width="5.44" height="5.44" fill="#f3d215"/><rect x="741.91" y="731.14" width="5.44" height="5.44" fill="#ea3c72"/><rect x="747.04" y="731.14" width="5.44" height="5.44" fill="#9003b1"/><rect x="752.18" y="731.14" width="5.44" height="5.44" fill="#3903d2"/><rect x="757.31" y="731.14" width="5.44" height="5.44" fill="#0603c9"/><rect x="762.45" y="731.14" width="5.44" height="5.44" fill="#030393"/><rect x="767.58" y="731.14" width="5.44" height="5.44" fill="#030372"/><rect x="772.72" y="731.14" width="5.44" height="5.44" fill="#03035d"/><rect x="777.85" y="731.14" width="5.44" height="5.44" fill="#030351"/><rect x="782.99" y="731.14" width="5.44" height="5.44" fill="#030348"/><rect x="788.12" y="731.14" width="5.44" height="5.44" fill="#03033f"/><rect x="793.26" y="731.14" width="5.44" height="5.44" fill="#03033c"/><rect x="798.39" y="731.14" width="5.44" height="5.44" fill="#030336"/><rect x="803.53" y="731.14" width="10.57" height="5.44" fill="#030333"/><rect x="813.80" y="731.14" width="20.84" height="5.44" fill="#030330"/><rect x="834.34" y="731.14" width="15.71" height="5.44" fill="#030333"/><rect x="849.74" y="731.14" width="25.98" height="5.44" fill="#030336"/><rect x="875.42" y="731.14" width="10.57" height="5.44" fill="#030333"/><rect x="885.69" y="731.14" width="5.44" height="5.44" fill="#030330"/><rect x="890.82" y="731.14" width="5.44" height="5.44" fill="#03032d"/><rect x="895.96" y="731.14" width="5.44" height="5.44" fill="#03032a"/><rect x="901.09" y="731.14" width="5.44" height="5.44" fill="#030327"/><rect x="906.23" y="731.14" width="10.57" height="5.44" fill="#03030f"/><rect x="536.50" y="736.27" width="20.84" height="5.44" fill="#03030f"/><rect x="557.04" y="736.27" width="72.19" height="5.44" fill="#030315"/><rect x="628.93" y="736.27" width="10.57" height="5.44" fill="#030318"/><rect x="639.20" y="736.27" width="5.44" height="5.44" fill="#03031b"/><rect x="644.34" y="736.27" width="5.44" height="5.44" fill="#03031e"/><rect x="649.47" y="736.27" width="5.44" height="5.44" fill="#030321"/><rect x="654.61" y="736.27" width="5.44" height="5.44" fill="#030327"/><rect x="659.74" y="736.27" width="5.44" height="5.44" fill="#03032a"/><rect x="664.88" y="736.27" width="5.44" height="5.44" fill="#030330"/><rect x="670.01" y="736.27" width="5.44" height="5.44" fill="#030339"/><rect x="675.15" y="736.27" width="5.44" height="5.44" fill="#030342"/><rect x="680.28" y="736.27" width="5.44" height="5.44" fill="#03034e"/><rect x="685.42" y="736.27" width="5.44" height="5.44" fill="#03035d"/><rect x="690.55" y="736.27" width="5.44" height="5.44" fill="#03037b"/><rect x="695.69" y="736.27" width="5.44" height="5.44" fill="#0603a5"/><rect x="700.82" y="736.27" width="5.44" height="5.44" fill="#1203de"/><rect x="705.96" y="736.27" width="5.44" height="5.44" fill="#6603c6"/><rect x="711.09" y="736.27" width="5.44" height="5.44" fill="#bd03a2"/><rect x="716.23" y="736.27" width="5.44" height="5.44" fill="#f06657"/><rect x="721.36" y="736.27" width="5.44" height="5.44" fill="#f3c618"/><rect x="726.50" y="736.27" width="5.44" height="5.44" fill="#f6f018"/><rect x="731.64" y="736.27" width="5.44" height="5.44" fill="#f3d515"/><rect x="736.77" y="736.27" width="5.44" height="5.44" fill="#f0754b"/><rect x="741.91" y="736.27" width="5.44" height="5.44" fill="#d2069c"/><rect x="747.04" y="736.27" width="5.44" height="5.44" fill="#7503c0"/><rect x="752.18" y="736.27" width="5.44" height="5.44" fill="#2403d8"/><rect x="757.31" y="736.27" width="5.44" height="5.44" fill="#0603ba"/><rect x="762.45" y="736.27" width="5.44" height="5.44" fill="#03038a"/><rect x="767.58" y="736.27" width="5.44" height="5.44" fill="#03036f"/><rect x="772.72" y="736.27" width="5.44" height="5.44" fill="#03035a"/><rect x="777.85" y="736.27" width="5.44" height="5.44" fill="#03034e"/><rect x="782.99" y="736.27" width="5.44" height="5.44" fill="#030345"/><rect x="788.12" y="736.27" width="5.44" height="5.44" fill="#03033f"/><rect x="793.26" y="736.27" width="5.44" height="5.44" fill="#030339"/><rect x="798.39" y="736.27" width="5.44" height="5.44" fill="#030336"/><rect x="803.53" y="736.27" width="5.44" height="5.44" fill="#030333"/><rect x="808.66" y="736.27" width="31.11" height="5.44" fill="#030330"/><rect x="839.47" y="736.27" width="15.71" height="5.44" fill="#030333"/><rect x="854.88" y="736.27" width="20.84" height="5.44" fill="#030336"/><rect x="875.42" y="736.27" width="10.57" height="5.44" fill="#030333"/><rect x="885.69" y="736.27" width="5.44" height="5.44" fill="#030330"/><rect x="890.82" y="736.27" width="5.44" height="5.44" fill="#03032d"/><rect x="895.96" y="736.27" width="5.44" height="5.44" fill="#03032a"/><rect x="901.09" y="736.27" width="5.44" height="5.44" fill="#030327"/><rect x="906.23" y="736.27" width="10.57" height="5.44" fill="#03030f"/><rect x="536.50" y="741.41" width="25.98" height="5.44" fill="#03030f"/><rect x="562.18" y="741.41" width="67.06" height="5.44" fill="#030315"/><rect x="628.93" y="741.41" width="10.57" height="5.44" fill="#030318"/><rect x="639.20" y="741.41" width="5.44" height="5.44" fill="#03031b"/><rect x="644.34" y="741.41" width="5.44" height="5.44" fill="#03031e"/><rect x="649.47" y="741.41" width="5.44" height="5.44" fill="#030321"/><rect x="654.61" y="741.41" width="5.44" height="5.44" fill="#030324"/><rect x="659.74" y="741.41" width="5.44" height="5.44" fill="#03032a"/><rect x="664.88" y="741.41" width="5.44" height="5.44" fill="#030330"/><rect x="670.01" y="741.41" width="5.44" height="5.44" fill="#030336"/><rect x="675.15" y="741.41" width="5.44" height="5.44" fill="#03033f"/><rect x="680.28" y="741.41" width="5.44" height="5.44" fill="#03034b"/><rect x="685.42" y="741.41" width="5.44" height="5.44" fill="#030357"/><rect x="690.55" y="741.41" width="5.44" height="5.44" fill="#03036f"/><rect x="695.69" y="741.41" width="5.44" height="5.44" fill="#030393"/><rect x="700.82" y="741.41" width="5.44" height="5.44" fill="#0603cc"/><rect x="705.96" y="741.41" width="5.44" height="5.44" fill="#3603d2"/><rect x="711.09" y="741.41" width="5.44" height="5.44" fill="#7e03ba"/><rect x="716.23" y="741.41" width="5.44" height="5.44" fill="#c9069c"/><rect x="721.36" y="741.41" width="5.44" height="5.44" fill="#ea3f72"/><rect x="726.50" y="741.41" width="5.44" height="5.44" fill="#f06657"/><rect x="731.64" y="741.41" width="5.44" height="5.44" fill="#ed4b69"/><rect x="736.77" y="741.41" width="5.44" height="5.44" fill="#d80699"/><rect x="741.91" y="741.41" width="5.44" height="5.44" fill="#8d03b1"/><rect x="747.04" y="741.41" width="5.44" height="5.44" fill="#4803cf"/><rect x="752.18" y="741.41" width="5.44" height="5.44" fill="#0903e1"/><rect x="757.31" y="741.41" width="5.44" height="5.44" fill="#0603a5"/><rect x="762.45" y="741.41" width="5.44" height="5.44" fill="#030381"/><rect x="767.58" y="741.41" width="5.44" height="5.44" fill="#030369"/><rect x="772.72" y="741.41" width="5.44" height="5.44" fill="#030357"/><rect x="777.85" y="741.41" width="5.44" height="5.44" fill="#03034e"/><rect x="782.99" y="741.41" width="5.44" height="5.44" fill="#030345"/><rect x="788.12" y="741.41" width="5.44" height="5.44" fill="#03033f"/><rect x="793.26" y="741.41" width="5.44" height="5.44" fill="#030339"/><rect x="798.39" y="741.41" width="5.44" height="5.44" fill="#030336"/><rect x="803.53" y="741.41" width="5.44" height="5.44" fill="#030333"/><rect x="808.66" y="741.41" width="31.11" height="5.44" fill="#030330"/><rect x="839.47" y="741.41" width="20.84" height="5.44" fill="#030333"/><rect x="860.01" y="741.41" width="10.57" height="5.44" fill="#030336"/><rect x="870.28" y="741.41" width="10.57" height="5.44" fill="#030333"/><rect x="880.55" y="741.41" width="10.57" height="5.44" fill="#030330"/><rect x="890.82" y="741.41" width="5.44" height="5.44" fill="#03032d"/><rect x="895.96" y="741.41" width="5.44" height="5.44" fill="#03032a"/><rect x="901.09" y="741.41" width="5.44" height="5.44" fill="#030327"/><rect x="906.23" y="741.41" width="10.57" height="5.44" fill="#03030f"/><rect x="536.50" y="746.54" width="25.98" height="5.44" fill="#03030f"/><rect x="562.18" y="746.54" width="72.19" height="5.44" fill="#030315"/><rect x="634.07" y="746.54" width="5.44" height="5.44" fill="#030318"/><rect x="639.20" y="746.54" width="5.44" height="5.44" fill="#03031b"/><rect x="644.34" y="746.54" width="5.44" height="5.44" fill="#03031e"/><rect x="649.47" y="746.54" width="5.44" height="5.44" fill="#030321"/><rect x="654.61" y="746.54" width="5.44" height="5.44" fill="#030324"/><rect x="659.74" y="746.54" width="5.44" height="5.44" fill="#030327"/><rect x="664.88" y="746.54" width="5.44" height="5.44" fill="#03032d"/><rect x="670.01" y="746.54" width="5.44" height="5.44" fill="#030336"/><rect x="675.15" y="746.54" width="5.44" height="5.44" fill="#03033c"/><rect x="680.28" y="746.54" width="5.44" height="5.44" fill="#030348"/><rect x="685.42" y="746.54" width="5.44" height="5.44" fill="#030354"/><rect x="690.55" y="746.54" width="5.44" height="5.44" fill="#030366"/><rect x="695.69" y="746.54" width="5.44" height="5.44" fill="#030381"/><rect x="700.82" y="746.54" width="5.44" height="5.44" fill="#0603a8"/><rect x="705.96" y="746.54" width="5.44" height="5.44" fill="#0c03de"/><rect x="711.09" y="746.54" width="5.44" height="5.44" fill="#4203cf"/><rect x="716.23" y="746.54" width="5.44" height="5.44" fill="#7503bd"/><rect x="721.36" y="746.54" width="5.44" height="5.44" fill="#9903ab"/><rect x="726.50" y="746.54" width="5.44" height="5.44" fill="#ab03a5"/><rect x="731.64" y="746.54" width="5.44" height="5.44" fill="#9f03a8"/><rect x="736.77" y="746.54" width="5.44" height="5.44" fill="#7e03ba"/><rect x="741.91" y="746.54" width="5.44" height="5.44" fill="#4e03cc"/><rect x="747.04" y="746.54" width="5.44" height="5.44" fill="#1803db"/><rect x="752.18" y="746.54" width="5.44" height="5.44" fill="#0603ba"/><rect x="757.31" y="746.54" width="5.44" height="5.44" fill="#030390"/><rect x="762.45" y="746.54" width="5.44" height="5.44" fill="#030375"/><rect x="767.58" y="746.54" width="5.44" height="5.44" fill="#030360"/><rect x="772.72" y="746.54" width="5.44" height="5.44" fill="#030354"/><rect x="777.85" y="746.54" width="5.44" height="5.44" fill="#03034b"/><rect x="782.99" y="746.54" width="5.44" height="5.44" fill="#030342"/><rect x="788.12" y="746.54" width="5.44" height="5.44" fill="#03033c"/><rect x="793.26" y="746.54" width="5.44" height="5.44" fill="#030336"/><rect x="798.39" y="746.54" width="5.44" height="5.44" fill="#030333"/><rect x="803.53" y="746.54" width="15.71" height="5.44" fill="#030330"/><rect x="818.93" y="746.54" width="10.57" height="5.44" fill="#03032d"/><rect x="829.20" y="746.54" width="15.71" height="5.44" fill="#030330"/><rect x="844.61" y="746.54" width="36.25" height="5.44" fill="#030333"/><rect x="880.55" y="746.54" width="5.44" height="5.44" fill="#030330"/><rect x="885.69" y="746.54" width="10.57" height="5.44" fill="#03032d"/><rect x="895.96" y="746.54" width="5.44" height="5.44" fill="#03032a"/><rect x="901.09" y="746.54" width="5.44" height="5.44" fill="#030324"/><rect x="906.23" y="746.54" width="10.57" height="5.44" fill="#03030f"/><rect x="536.50" y="751.68" width="31.11" height="5.44" fill="#03030f"/><rect x="567.31" y="751.68" width="67.06" height="5.44" fill="#030315"/><rect x="634.07" y="751.68" width="5.44" height="5.44" fill="#030318"/><rect x="639.20" y="751.68" width="10.57" height="5.44" fill="#03031b"/><rect x="649.47" y="751.68" width="5.44" height="5.44" fill="#03031e"/><rect x="654.61" y="751.68" width="5.44" height="5.44" fill="#030324"/><rect x="659.74" y="751.68" width="5.44" height="5.44" fill="#030327"/><rect x="664.88" y="751.68" width="5.44" height="5.44" fill="#03032d"/><rect x="670.01" y="751.68" width="5.44" height="5.44" fill="#030333"/><rect x="675.15" y="751.68" width="5.44" height="5.44" fill="#030339"/><rect x="680.28" y="751.68" width="5.44" height="5.44" fill="#030342"/><rect x="685.42" y="751.68" width="5.44" height="5.44" fill="#03034e"/><rect x="690.55" y="751.68" width="5.44" height="5.44" fill="#03035a"/><rect x="695.69" y="751.68" width="5.44" height="5.44" fill="#03036f"/><rect x="700.82" y="751.68" width="5.44" height="5.44" fill="#03038d"/><rect x="705.96" y="751.68" width="5.44" height="5.44" fill="#0603b1"/><rect x="711.09" y="751.68" width="5.44" height="5.44" fill="#0903e1"/><rect x="716.23" y="751.68" width="5.44" height="5.44" fill="#2a03d8"/><rect x="721.36" y="751.68" width="5.44" height="5.44" fill="#4803cf"/><rect x="726.50" y="751.68" width="5.44" height="5.44" fill="#5403cc"/><rect x="731.64" y="751.68" width="5.44" height="5.44" fill="#4b03cc"/><rect x="736.77" y="751.68" width="5.44" height="5.44" fill="#3303d5"/><rect x="741.91" y="751.68" width="5.44" height="5.44" fill="#1203de"/><rect x="747.04" y="751.68" width="5.44" height="5.44" fill="#0603c0"/><rect x="752.18" y="751.68" width="5.44" height="5.44" fill="#030399"/><rect x="757.31" y="751.68" width="5.44" height="5.44" fill="#03037e"/><rect x="762.45" y="751.68" width="5.44" height="5.44" fill="#030369"/><rect x="767.58" y="751.68" width="5.44" height="5.44" fill="#030357"/><rect x="772.72" y="751.68" width="5.44" height="5.44" fill="#03034e"/><rect x="777.85" y="751.68" width="5.44" height="5.44" fill="#030345"/><rect x="782.99" y="751.68" width="5.44" height="5.44" fill="#03033f"/><rect x="788.12" y="751.68" width="5.44" height="5.44" fill="#030339"/><rect x="793.26" y="751.68" width="5.44" height="5.44" fill="#030336"/><rect x="798.39" y="751.68" width="5.44" height="5.44" fill="#030333"/><rect x="803.53" y="751.68" width="5.44" height="5.44" fill="#030330"/><rect x="808.66" y="751.68" width="31.11" height="5.44" fill="#03032d"/><rect x="839.47" y="751.68" width="15.71" height="5.44" fill="#030330"/><rect x="854.88" y="751.68" width="20.84" height="5.44" fill="#030333"/><rect x="875.42" y="751.68" width="10.57" height="5.44" fill="#030330"/><rect x="885.69" y="751.68" width="5.44" height="5.44" fill="#03032d"/><rect x="890.82" y="751.68" width="5.44" height="5.44" fill="#03032a"/><rect x="895.96" y="751.68" width="5.44" height="5.44" fill="#030327"/><rect x="901.09" y="751.68" width="5.44" height="5.44" fill="#030324"/><rect x="906.23" y="751.68" width="10.57" height="5.44" fill="#03030f"/><rect x="536.50" y="756.81" width="31.11" height="5.44" fill="#03030f"/><rect x="567.31" y="756.81" width="67.06" height="5.44" fill="#030315"/><rect x="634.07" y="756.81" width="10.57" height="5.44" fill="#030318"/><rect x="644.34" y="756.81" width="5.44" height="5.44" fill="#03031b"/><rect x="649.47" y="756.81" width="5.44" height="5.44" fill="#03031e"/><rect x="654.61" y="756.81" width="5.44" height="5.44" fill="#030321"/><rect x="659.74" y="756.81" width="5.44" height="5.44" fill="#030324"/><rect x="664.88" y="756.81" width="5.44" height="5.44" fill="#03032a"/><rect x="670.01" y="756.81" width="5.44" height="5.44" fill="#030330"/><rect x="675.15" y="756.81" width="5.44" height="5.44" fill="#030336"/><rect x="680.28" y="756.81" width="5.44" height="5.44" fill="#03033f"/><rect x="685.42" y="756.81" width="5.44" height="5.44" fill="#030348"/><rect x="690.55" y="756.81" width="5.44" height="5.44" fill="#030351"/><rect x="695.69" y="756.81" width="5.44" height="5.44" fill="#030360"/><rect x="700.82" y="756.81" width="5.44" height="5.44" fill="#030375"/><rect x="705.96" y="756.81" width="5.44" height="5.44" fill="#03038d"/><rect x="711.09" y="756.81" width="5.44" height="5.44" fill="#0603a8"/><rect x="716.23" y="756.81" width="5.44" height="5.44" fill="#0603c3"/><rect x="721.36" y="756.81" width="5.44" height="5.44" fill="#0903d8"/><rect x="726.50" y="756.81" width="5.44" height="5.44" fill="#0c03de"/><rect x="731.64" y="756.81" width="5.44" height="5.44" fill="#0903de"/><rect x="736.77" y="756.81" width="5.44" height="5.44" fill="#0603cc"/><rect x="741.91" y="756.81" width="5.44" height="5.44" fill="#0603b1"/><rect x="747.04" y="756.81" width="5.44" height="5.44" fill="#030399"/><rect x="752.18" y="756.81" width="5.44" height="5.44" fill="#030381"/><rect x="757.31" y="756.81" width="5.44" height="5.44" fill="#03036c"/><rect x="762.45" y="756.81" width="5.44" height="5.44" fill="#03035d"/><rect x="767.58" y="756.81" width="5.44" height="5.44" fill="#030351"/><rect x="772.72" y="756.81" width="5.44" height="5.44" fill="#030348"/><rect x="777.85" y="756.81" width="5.44" height="5.44" fill="#030342"/><rect x="782.99" y="756.81" width="5.44" height="5.44" fill="#03033c"/><rect x="788.12" y="756.81" width="5.44" height="5.44" fill="#030336"/><rect x="793.26" y="756.81" width="5.44" height="5.44" fill="#030333"/><rect x="798.39" y="756.81" width="5.44" height="5.44" fill="#030330"/><rect x="803.53" y="756.81" width="41.38" height="5.44" fill="#03032d"/><rect x="844.61" y="756.81" width="36.25" height="5.44" fill="#030330"/><rect x="880.55" y="756.81" width="5.44" height="5.44" fill="#03032d"/><rect x="885.69" y="756.81" width="10.57" height="5.44" fill="#03032a"/><rect x="895.96" y="756.81" width="5.44" height="5.44" fill="#030327"/><rect x="901.09" y="756.81" width="15.71" height="5.44" fill="#03030f"/><rect x="536.50" y="761.95" width="36.25" height="5.44" fill="#03030f"/><rect x="572.45" y="761.95" width="61.92" height="5.44" fill="#030315"/><rect x="634.07" y="761.95" width="10.57" height="5.44" fill="#030318"/><rect x="644.34" y="761.95" width="5.44" height="5.44" fill="#03031b"/><rect x="649.47" y="761.95" width="5.44" height="5.44" fill="#03031e"/><rect x="654.61" y="761.95" width="5.44" height="5.44" fill="#030321"/><rect x="659.74" y="761.95" width="5.44" height="5.44" fill="#030324"/><rect x="664.88" y="761.95" width="5.44" height="5.44" fill="#030327"/><rect x="670.01" y="761.95" width="5.44" height="5.44" fill="#03032d"/><rect x="675.15" y="761.95" width="5.44" height="5.44" fill="#030333"/><rect x="680.28" y="761.95" width="5.44" height="5.44" fill="#030339"/><rect x="685.42" y="761.95" width="5.44" height="5.44" fill="#030342"/><rect x="690.55" y="761.95" width="5.44" height="5.44" fill="#03034b"/><rect x="695.69" y="761.95" width="5.44" height="5.44" fill="#030354"/><rect x="700.82" y="761.95" width="5.44" height="5.44" fill="#030363"/><rect x="705.96" y="761.95" width="5.44" height="5.44" fill="#030372"/><rect x="711.09" y="761.95" width="5.44" height="5.44" fill="#030384"/><rect x="716.23" y="761.95" width="5.44" height="5.44" fill="#030393"/><rect x="721.36" y="761.95" width="5.44" height="5.44" fill="#03039f"/><rect x="726.50" y="761.95" width="5.44" height="5.44" fill="#0603a5"/><rect x="731.64" y="761.95" width="5.44" height="5.44" fill="#0303a2"/><rect x="736.77" y="761.95" width="5.44" height="5.44" fill="#030399"/><rect x="741.91" y="761.95" width="5.44" height="5.44" fill="#03038a"/><rect x="747.04" y="761.95" width="5.44" height="5.44" fill="#03037b"/><rect x="752.18" y="761.95" width="5.44" height="5.44" fill="#03036c"/><rect x="757.31" y="761.95" width="5.44" height="5.44" fill="#03035d"/><rect x="762.45" y="761.95" width="5.44" height="5.44" fill="#030354"/><rect x="767.58" y="761.95" width="5.44" height="5.44" fill="#03034b"/><rect x="772.72" y="761.95" width="5.44" height="5.44" fill="#030345"/><rect x="777.85" y="761.95" width="5.44" height="5.44" fill="#03033f"/><rect x="782.99" y="761.95" width="5.44" height="5.44" fill="#030339"/><rect x="788.12" y="761.95" width="5.44" height="5.44" fill="#030333"/><rect x="793.26" y="761.95" width="5.44" height="5.44" fill="#030330"/><rect x="798.39" y="761.95" width="10.57" height="5.44" fill="#03032d"/><rect x="808.66" y="761.95" width="31.11" height="5.44" fill="#03032a"/><rect x="839.47" y="761.95" width="41.38" height="5.44" fill="#03032d"/><rect x="880.55" y="761.95" width="10.57" height="5.44" fill="#03032a"/><rect x="890.82" y="761.95" width="5.44" height="5.44" fill="#030327"/><rect x="895.96" y="761.95" width="20.84" height="5.44" fill="#03030f"/><rect x="536.50" y="767.08" width="36.25" height="5.44" fill="#03030f"/><rect x="572.45" y="767.08" width="67.06" height="5.44" fill="#030315"/><rect x="639.20" y="767.08" width="5.44" height="5.44" fill="#030318"/><rect x="644.34" y="767.08" width="10.57" height="5.44" fill="#03031b"/><rect x="654.61" y="767.08" width="5.44" height="5.44" fill="#03031e"/><rect x="659.74" y="767.08" width="5.44" height="5.44" fill="#030321"/><rect x="664.88" y="767.08" width="5.44" height="5.44" fill="#030324"/><rect x="670.01" y="767.08" width="5.44" height="5.44" fill="#03032a"/><rect x="675.15" y="767.08" width="5.44" height="5.44" fill="#030330"/><rect x="680.28" y="767.08" width="5.44" height="5.44" fill="#030336"/><rect x="685.42" y="767.08" width="5.44" height="5.44" fill="#03033c"/><rect x="690.55" y="767.08" width="5.44" height="5.44" fill="#030342"/><rect x="695.69" y="767.08" width="5.44" height="5.44" fill="#03034b"/><rect x="700.82" y="767.08" width="5.44" height="5.44" fill="#030354"/><rect x="705.96" y="767.08" width="5.44" height="5.44" fill="#03035d"/><rect x="711.09" y="767.08" width="5.44" height="5.44" fill="#030369"/><rect x="716.23" y="767.08" width="5.44" height="5.44" fill="#030375"/><rect x="721.36" y="767.08" width="5.44" height="5.44" fill="#03037b"/><rect x="726.50" y="767.08" width="10.57" height="5.44" fill="#03037e"/><rect x="736.77" y="767.08" width="5.44" height="5.44" fill="#030378"/><rect x="741.91" y="767.08" width="5.44" height="5.44" fill="#03036f"/><rect x="747.04" y="767.08" width="5.44" height="5.44" fill="#030366"/><rect x="752.18" y="767.08" width="5.44" height="5.44" fill="#03035a"/><rect x="757.31" y="767.08" width="5.44" height="5.44" fill="#030354"/><rect x="762.45" y="767.08" width="5.44" height="5.44" fill="#03034b"/><rect x="767.58" y="767.08" width="5.44" height="5.44" fill="#030345"/><rect x="772.72" y="767.08" width="5.44" height="5.44" fill="#03033f"/><rect x="777.85" y="767.08" width="5.44" height="5.44" fill="#030339"/><rect x="782.99" y="767.08" width="5.44" height="5.44" fill="#030336"/><rect x="788.12" y="767.08" width="5.44" height="5.44" fill="#030330"/><rect x="793.26" y="767.08" width="10.57" height="5.44" fill="#03032d"/><rect x="803.53" y="767.08" width="15.71" height="5.44" fill="#03032a"/><rect x="818.93" y="767.08" width="10.57" height="5.44" fill="#030327"/><rect x="829.20" y="767.08" width="25.98" height="5.44" fill="#03032a"/><rect x="854.88" y="767.08" width="15.71" height="5.44" fill="#03032d"/><rect x="870.28" y="767.08" width="15.71" height="5.44" fill="#03032a"/><rect x="885.69" y="767.08" width="5.44" height="5.44" fill="#030327"/><rect x="890.82" y="767.08" width="25.98" height="5.44" fill="#03030f"/><rect x="536.50" y="772.22" width="36.25" height="5.44" fill="#03030f"/><rect x="572.45" y="772.22" width="67.06" height="5.44" fill="#030315"/><rect x="639.20" y="772.22" width="10.57" height="5.44" fill="#030318"/><rect x="649.47" y="772.22" width="5.44" height="5.44" fill="#03031b"/><rect x="654.61" y="772.22" width="5.44" height="5.44" fill="#03031e"/><rect x="659.74" y="772.22" width="5.44" height="5.44" fill="#030321"/><rect x="664.88" y="772.22" width="5.44" height="5.44" fill="#030324"/><rect x="670.01" y="772.22" width="5.44" height="5.44" fill="#030327"/><rect x="675.15" y="772.22" width="5.44" height="5.44" fill="#03032a"/><rect x="680.28" y="772.22" width="5.44" height="5.44" fill="#030330"/><rect x="685.42" y="772.22" width="5.44" height="5.44" fill="#030336"/><rect x="690.55" y="772.22" width="5.44" height="5.44" fill="#03033c"/><rect x="695.69" y="772.22" width="5.44" height="5.44" fill="#030342"/><rect x="700.82" y="772.22" width="5.44" height="5.44" fill="#03034b"/><rect x="705.96" y="772.22" width="5.44" height="5.44" fill="#030351"/><rect x="711.09" y="772.22" width="5.44" height="5.44" fill="#030357"/><rect x="716.23" y="772.22" width="5.44" height="5.44" fill="#03035d"/><rect x="721.36" y="772.22" width="5.44" height="5.44" fill="#030363"/><rect x="726.50" y="772.22" width="5.44" height="5.44" fill="#030366"/><rect x="731.64" y="772.22" width="5.44" height="5.44" fill="#030363"/><rect x="736.77" y="772.22" width="5.44" height="5.44" fill="#030360"/><rect x="741.91" y="772.22" width="5.44" height="5.44" fill="#03035a"/><rect x="747.04" y="772.22" width="5.44" height="5.44" fill="#030357"/><rect x="752.18" y="772.22" width="5.44" height="5.44" fill="#030351"/><rect x="757.31" y="772.22" width="5.44" height="5.44" fill="#03034b"/><rect x="762.45" y="772.22" width="5.44" height="5.44" fill="#030345"/><rect x="767.58" y="772.22" width="5.44" height="5.44" fill="#03033f"/><rect x="772.72" y="772.22" width="5.44" height="5.44" fill="#030339"/><rect x="777.85" y="772.22" width="5.44" height="5.44" fill="#030336"/><rect x="782.99" y="772.22" width="5.44" height="5.44" fill="#030333"/><rect x="788.12" y="772.22" width="5.44" height="5.44" fill="#030330"/><rect x="793.26" y="772.22" width="5.44" height="5.44" fill="#03032d"/><rect x="798.39" y="772.22" width="10.57" height="5.44" fill="#03032a"/><rect x="808.66" y="772.22" width="41.38" height="5.44" fill="#030327"/><rect x="849.74" y="772.22" width="25.98" height="5.44" fill="#03032a"/><rect x="875.42" y="772.22" width="10.57" height="5.44" fill="#030327"/><rect x="885.69" y="772.22" width="5.44" height="5.44" fill="#030324"/><rect x="890.82" y="772.22" width="25.98" height="5.44" fill="#03030f"/><rect x="536.50" y="777.35" width="41.38" height="5.44" fill="#03030f"/><rect x="577.58" y="777.35" width="67.06" height="5.44" fill="#030315"/><rect x="644.34" y="777.35" width="5.44" height="5.44" fill="#030318"/><rect x="649.47" y="777.35" width="10.57" height="5.44" fill="#03031b"/><rect x="659.74" y="777.35" width="5.44" height="5.44" fill="#03031e"/><rect x="664.88" y="777.35" width="5.44" height="5.44" fill="#030321"/><rect x="670.01" y="777.35" width="5.44" height="5.44" fill="#030324"/><rect x="675.15" y="777.35" width="5.44" height="5.44" fill="#030327"/><rect x="680.28" y="777.35" width="5.44" height="5.44" fill="#03032d"/><rect x="685.42" y="777.35" width="5.44" height="5.44" fill="#030330"/><rect x="690.55" y="777.35" width="5.44" height="5.44" fill="#030336"/><rect x="695.69" y="777.35" width="5.44" height="5.44" fill="#03033c"/><rect x="700.82" y="777.35" width="5.44" height="5.44" fill="#030342"/><rect x="705.96" y="777.35" width="5.44" height="5.44" fill="#030348"/><rect x="711.09" y="777.35" width="5.44" height="5.44" fill="#03034b"/><rect x="716.23" y="777.35" width="5.44" height="5.44" fill="#03034e"/><rect x="721.36" y="777.35" width="5.44" height="5.44" fill="#030351"/><rect x="726.50" y="777.35" width="10.57" height="5.44" fill="#030354"/><rect x="736.77" y="777.35" width="5.44" height="5.44" fill="#030351"/><rect x="741.91" y="777.35" width="5.44" height="5.44" fill="#03034e"/><rect x="747.04" y="777.35" width="5.44" height="5.44" fill="#03034b"/><rect x="752.18" y="777.35" width="5.44" height="5.44" fill="#030348"/><rect x="757.31" y="777.35" width="5.44" height="5.44" fill="#030342"/><rect x="762.45" y="777.35" width="5.44" height="5.44" fill="#03033f"/><rect x="767.58" y="777.35" width="5.44" height="5.44" fill="#030339"/><rect x="772.72" y="777.35" width="5.44" height="5.44" fill="#030336"/><rect x="777.85" y="777.35" width="5.44" height="5.44" fill="#030330"/><rect x="782.99" y="777.35" width="10.57" height="5.44" fill="#03032d"/><rect x="793.26" y="777.35" width="5.44" height="5.44" fill="#03032a"/><rect x="798.39" y="777.35" width="15.71" height="5.44" fill="#030327"/><rect x="813.80" y="777.35" width="31.11" height="5.44" fill="#030324"/><rect x="844.61" y="777.35" width="31.11" height="5.44" fill="#030327"/><rect x="875.42" y="777.35" width="10.57" height="5.44" fill="#030324"/><rect x="885.69" y="777.35" width="31.11" height="5.44" fill="#03030f"/><rect x="536.50" y="782.49" width="41.38" height="5.44" fill="#03030f"/><rect x="577.58" y="782.49" width="67.06" height="5.44" fill="#030315"/><rect x="644.34" y="782.49" width="10.57" height="5.44" fill="#030318"/><rect x="654.61" y="782.49" width="10.57" height="5.44" fill="#03031b"/><rect x="664.88" y="782.49" width="5.44" height="5.44" fill="#03031e"/><rect x="670.01" y="782.49" width="5.44" height="5.44" fill="#030321"/><rect x="675.15" y="782.49" width="5.44" height="5.44" fill="#030324"/><rect x="680.28" y="782.49" width="5.44" height="5.44" fill="#030327"/><rect x="685.42" y="782.49" width="5.44" height="5.44" fill="#03032d"/><rect x="690.55" y="782.49" width="5.44" height="5.44" fill="#030330"/><rect x="695.69" y="782.49" width="5.44" height="5.44" fill="#030336"/><rect x="700.82" y="782.49" width="5.44" height="5.44" fill="#030339"/><rect x="705.96" y="782.49" width="5.44" height="5.44" fill="#03033f"/><rect x="711.09" y="782.49" width="5.44" height="5.44" fill="#030342"/><rect x="716.23" y="782.49" width="5.44" height="5.44" fill="#030345"/><rect x="721.36" y="782.49" width="20.84" height="5.44" fill="#030348"/><rect x="741.91" y="782.49" width="5.44" height="5.44" fill="#030345"/><rect x="747.04" y="782.49" width="5.44" height="5.44" fill="#030342"/><rect x="752.18" y="782.49" width="5.44" height="5.44" fill="#03033f"/><rect x="757.31" y="782.49" width="5.44" height="5.44" fill="#03033c"/><rect x="762.45" y="782.49" width="5.44" height="5.44" fill="#030336"/><rect x="767.58" y="782.49" width="5.44" height="5.44" fill="#030333"/><rect x="772.72" y="782.49" width="5.44" height="5.44" fill="#030330"/><rect x="777.85" y="782.49" width="5.44" height="5.44" fill="#03032d"/><rect x="782.99" y="782.49" width="10.57" height="5.44" fill="#03032a"/><rect x="793.26" y="782.49" width="10.57" height="5.44" fill="#030327"/><rect x="803.53" y="782.49" width="72.19" height="5.44" fill="#030324"/><rect x="875.42" y="782.49" width="5.44" height="5.44" fill="#030321"/><rect x="880.55" y="782.49" width="36.25" height="5.44" fill="#03030f"/><rect x="536.50" y="787.62" width="46.52" height="5.44" fill="#03030f"/><rect x="582.72" y="787.62" width="67.06" height="5.44" fill="#030315"/><rect x="649.47" y="787.62" width="10.57" height="5.44" fill="#030318"/><rect x="659.74" y="787.62" width="5.44" height="5.44" fill="#03031b"/><rect x="664.88" y="787.62" width="10.57" height="5.44" fill="#03031e"/><rect x="675.15" y="787.62" width="5.44" height="5.44" fill="#030321"/><rect x="680.28" y="787.62" width="5.44" height="5.44" fill="#030324"/><rect x="685.42" y="787.62" width="5.44" height="5.44" fill="#030327"/><rect x="690.55" y="787.62" width="5.44" height="5.44" fill="#03032d"/><rect x="695.69" y="787.62" width="5.44" height="5.44" fill="#030330"/><rect x="700.82" y="787.62" width="5.44" height="5.44" fill="#030333"/><rect x="705.96" y="787.62" width="5.44" height="5.44" fill="#030336"/><rect x="711.09" y="787.62" width="5.44" height="5.44" fill="#030339"/><rect x="716.23" y="787.62" width="10.57" height="5.44" fill="#03033c"/><rect x="726.50" y="787.62" width="15.71" height="5.44" fill="#03033f"/><rect x="741.91" y="787.62" width="5.44" height="5.44" fill="#03033c"/><rect x="747.04" y="787.62" width="10.57" height="5.44" fill="#030339"/><rect x="757.31" y="787.62" width="5.44" height="5.44" fill="#030336"/><rect x="762.45" y="787.62" width="5.44" height="5.44" fill="#030333"/><rect x="767.58" y="787.62" width="5.44" height="5.44" fill="#030330"/><rect x="772.72" y="787.62" width="5.44" height="5.44" fill="#03032d"/><rect x="777.85" y="787.62" width="5.44" height="5.44" fill="#03032a"/><rect x="782.99" y="787.62" width="10.57" height="5.44" fill="#030327"/><rect x="793.26" y="787.62" width="15.71" height="5.44" fill="#030324"/><rect x="808.66" y="787.62" width="67.06" height="5.44" fill="#030321"/><rect x="875.42" y="787.62" width="41.38" height="5.44" fill="#03030f"/><rect x="536.50" y="792.76" width="46.52" height="5.44" fill="#03030f"/><rect x="582.72" y="792.76" width="72.19" height="5.44" fill="#030315"/><rect x="654.61" y="792.76" width="10.57" height="5.44" fill="#030318"/><rect x="664.88" y="792.76" width="5.44" height="5.44" fill="#03031b"/><rect x="670.01" y="792.76" width="10.57" height="5.44" fill="#03031e"/><rect x="680.28" y="792.76" width="5.44" height="5.44" fill="#030321"/><rect x="685.42" y="792.76" width="5.44" height="5.44" fill="#030324"/><rect x="690.55" y="792.76" width="5.44" height="5.44" fill="#030327"/><rect x="695.69" y="792.76" width="5.44" height="5.44" fill="#03032a"/><rect x="700.82" y="792.76" width="5.44" height="5.44" fill="#03032d"/><rect x="705.96" y="792.76" width="5.44" height="5.44" fill="#030330"/><rect x="711.09" y="792.76" width="10.57" height="5.44" fill="#030333"/><rect x="721.36" y="792.76" width="25.98" height="5.44" fill="#030336"/><rect x="747.04" y="792.76" width="5.44" height="5.44" fill="#030333"/><rect x="752.18" y="792.76" width="10.57" height="5.44" fill="#030330"/><rect x="762.45" y="792.76" width="5.44" height="5.44" fill="#03032d"/><rect x="767.58" y="792.76" width="10.57" height="5.44" fill="#03032a"/><rect x="777.85" y="792.76" width="5.44" height="5.44" fill="#030327"/><rect x="782.99" y="792.76" width="15.71" height="5.44" fill="#030324"/><rect x="798.39" y="792.76" width="15.71" height="5.44" fill="#030321"/><rect x="813.80" y="792.76" width="56.79" height="5.44" fill="#03031e"/><rect x="870.28" y="792.76" width="46.52" height="5.44" fill="#03030f"/><rect x="536.50" y="797.89" width="51.65" height="5.44" fill="#03030f"/><rect x="587.85" y="797.89" width="72.19" height="5.44" fill="#030315"/><rect x="659.74" y="797.89" width="10.57" height="5.44" fill="#030318"/><rect x="670.01" y="797.89" width="5.44" height="5.44" fill="#03031b"/><rect x="675.15" y="797.89" width="10.57" height="5.44" fill="#03031e"/><rect x="685.42" y="797.89" width="5.44" height="5.44" fill="#030321"/><rect x="690.55" y="797.89" width="5.44" height="5.44" fill="#030324"/><rect x="695.69" y="797.89" width="10.57" height="5.44" fill="#030327"/><rect x="705.96" y="797.89" width="5.44" height="5.44" fill="#03032a"/><rect x="711.09" y="797.89" width="10.57" height="5.44" fill="#03032d"/><rect x="721.36" y="797.89" width="20.84" height="5.44" fill="#030330"/><rect x="741.91" y="797.89" width="15.71" height="5.44" fill="#03032d"/><rect x="757.31" y="797.89" width="10.57" height="5.44" fill="#03032a"/><rect x="767.58" y="797.89" width="10.57" height="5.44" fill="#030327"/><rect x="777.85" y="797.89" width="10.57" height="5.44" fill="#030324"/><rect x="788.12" y="797.89" width="10.57" height="5.44" fill="#030321"/><rect x="798.39" y="797.89" width="67.06" height="5.44" fill="#03031e"/><rect x="865.15" y="797.89" width="5.44" height="5.44" fill="#03031b"/><rect x="870.28" y="797.89" width="46.52" height="5.44" fill="#03030f"/><rect x="536.50" y="803.03" width="51.65" height="5.44" fill="#03030f"/><rect x="587.85" y="803.03" width="77.33" height="5.44" fill="#030315"/><rect x="664.88" y="803.03" width="10.57" height="5.44" fill="#030318"/><rect x="675.15" y="803.03" width="10.57" height="5.44" fill="#03031b"/><rect x="685.42" y="803.03" width="5.44" height="5.44" fill="#03031e"/><rect x="690.55" y="803.03" width="10.57" height="5.44" fill="#030321"/><rect x="700.82" y="803.03" width="10.57" height="5.44" fill="#030324"/><rect x="711.09" y="803.03" width="10.57" height="5.44" fill="#030327"/><rect x="721.36" y="803.03" width="25.98" height="5.44" fill="#03032a"/><rect x="747.04" y="803.03" width="15.71" height="5.44" fill="#030327"/><rect x="762.45" y="803.03" width="15.71" height="5.44" fill="#030324"/><rect x="777.85" y="803.03" width="10.57" height="5.44" fill="#030321"/><rect x="788.12" y="803.03" width="20.84" height="5.44" fill="#03031e"/><rect x="808.66" y="803.03" width="56.79" height="5.44" fill="#03031b"/><rect x="865.15" y="803.03" width="51.65" height="5.44" fill="#03030f"/><rect x="536.50" y="808.16" width="56.79" height="5.44" fill="#03030f"/><rect x="592.99" y="808.16" width="77.33" height="5.44" fill="#030315"/><rect x="670.01" y="808.16" width="10.57" height="5.44" fill="#030318"/><rect x="680.28" y="808.16" width="10.57" height="5.44" fill="#03031b"/><rect x="690.55" y="808.16" width="10.57" height="5.44" fill="#03031e"/><rect x="700.82" y="808.16" width="10.57" height="5.44" fill="#030321"/><rect x="711.09" y="808.16" width="51.65" height="5.44" fill="#030324"/><rect x="762.45" y="808.16" width="15.71" height="5.44" fill="#030321"/><rect x="777.85" y="808.16" width="15.71" height="5.44" fill="#03031e"/><rect x="793.26" y="808.16" width="31.11" height="5.44" fill="#03031b"/><rect x="824.07" y="808.16" width="36.25" height="5.44" fill="#030318"/><rect x="860.01" y="808.16" width="56.79" height="5.44" fill="#03030f"/><rect x="536.50" y="813.30" width="56.79" height="5.44" fill="#03030f"/><rect x="592.99" y="813.30" width="82.46" height="5.44" fill="#030315"/><rect x="675.15" y="813.30" width="10.57" height="5.44" fill="#030318"/><rect x="685.42" y="813.30" width="15.71" height="5.44" fill="#03031b"/><rect x="700.82" y="813.30" width="15.71" height="5.44" fill="#03031e"/><rect x="716.23" y="813.30" width="46.52" height="5.44" fill="#030321"/><rect x="762.45" y="813.30" width="20.84" height="5.44" fill="#03031e"/><rect x="782.99" y="813.30" width="20.84" height="5.44" fill="#03031b"/><rect x="803.53" y="813.30" width="51.65" height="5.44" fill="#030318"/><rect x="854.88" y="813.30" width="61.92" height="5.44" fill="#03030f"/><rect x="536.50" y="818.43" width="61.92" height="5.44" fill="#03030f"/><rect x="598.12" y="818.43" width="82.46" height="5.44" fill="#030315"/><rect x="680.28" y="818.43" width="15.71" height="5.44" fill="#030318"/><rect x="695.69" y="818.43" width="20.84" height="5.44" fill="#03031b"/><rect x="716.23" y="818.43" width="51.65" height="5.44" fill="#03031e"/><rect x="767.58" y="818.43" width="25.98" height="5.44" fill="#03031b"/><rect x="793.26" y="818.43" width="31.11" height="5.44" fill="#030318"/><rect x="824.07" y="818.43" width="31.11" height="5.44" fill="#030315"/><rect x="854.88" y="818.43" width="61.92" height="5.44" fill="#03030f"/><rect x="536.50" y="823.57" width="61.92" height="5.44" fill="#03030f"/><rect x="598.12" y="823.57" width="92.73" height="5.44" fill="#030315"/><rect x="690.55" y="823.57" width="20.84" height="5.44" fill="#030318"/><rect x="711.09" y="823.57" width="61.92" height="5.44" fill="#03031b"/><rect x="772.72" y="823.57" width="31.11" height="5.44" fill="#030318"/><rect x="803.53" y="823.57" width="46.52" height="5.44" fill="#030315"/><rect x="849.74" y="823.57" width="67.06" height="5.44" fill="#03030f"/><rect x="536.50" y="828.70" width="67.06" height="5.44" fill="#03030f"/><rect x="603.26" y="828.70" width="103.00" height="5.44" fill="#030315"/><rect x="705.96" y="828.70" width="82.46" height="5.44" fill="#030318"/><rect x="788.12" y="828.70" width="56.79" height="5.44" fill="#030315"/><rect x="844.61" y="828.70" width="72.19" height="5.44" fill="#03030f"/><rect x="536.50" y="833.84" width="67.06" height="5.44" fill="#03030f"/><rect x="603.26" y="833.84" width="118.41" height="5.44" fill="#030315"/><rect x="721.36" y="833.84" width="46.52" height="5.44" fill="#030318"/><rect x="767.58" y="833.84" width="72.19" height="5.44" fill="#030315"/><rect x="839.47" y="833.84" width="77.33" height="5.44" fill="#03030f"/><rect x="536.50" y="838.97" width="72.19" height="5.44" fill="#03030f"/><rect x="608.39" y="838.97" width="231.38" height="5.44" fill="#030315"/><rect x="839.47" y="838.97" width="77.33" height="5.44" fill="#03030f"/><rect x="536.50" y="844.11" width="72.19" height="5.44" fill="#03030f"/><rect x="608.39" y="844.11" width="226.25" height="5.44" fill="#030315"/><rect x="834.34" y="844.11" width="82.46" height="5.44" fill="#03030f"/><rect x="536.50" y="849.24" width="77.33" height="5.44" fill="#03030f"/><rect x="613.53" y="849.24" width="215.98" height="5.44" fill="#030315"/><rect x="829.20" y="849.24" width="87.60" height="5.44" fill="#03030f"/><rect x="536.50" y="854.38" width="77.33" height="5.44" fill="#03030f"/><rect x="613.53" y="854.38" width="210.84" height="5.44" fill="#030315"/><rect x="824.07" y="854.38" width="92.73" height="5.44" fill="#03030f"/><rect x="536.50" y="859.51" width="82.46" height="5.44" fill="#03030f"/><rect x="618.66" y="859.51" width="205.71" height="5.44" fill="#030315"/><rect x="824.07" y="859.51" width="92.73" height="5.44" fill="#03030f"/><rect x="536.50" y="864.65" width="92.73" height="5.44" fill="#03030f"/><rect x="628.93" y="864.65" width="190.30" height="5.44" fill="#030315"/><rect x="818.93" y="864.65" width="97.87" height="5.44" fill="#03030f"/><rect x="536.50" y="869.78" width="138.95" height="5.44" fill="#03030f"/><rect x="675.15" y="869.78" width="138.95" height="5.44" fill="#030315"/><rect x="813.80" y="869.78" width="103.00" height="5.44" fill="#03030f"/><rect x="536.50" y="874.92" width="180.03" height="5.44" fill="#03030f"/><rect x="716.23" y="874.92" width="92.73" height="5.44" fill="#030315"/><rect x="808.66" y="874.92" width="108.14" height="5.44" fill="#03030f"/><rect x="536.50" y="880.05" width="221.11" height="5.44" fill="#03030f"/><rect x="757.31" y="880.05" width="51.65" height="5.44" fill="#030315"/><rect x="808.66" y="880.05" width="108.14" height="5.44" fill="#03030f"/><rect x="536.50" y="885.19" width="380.30" height="5.44" fill="#03030f"/><rect x="536.50" y="890.32" width="380.30" height="5.44" fill="#03030f"/><rect x="536.50" y="895.46" width="380.30" height="5.44" fill="#03030f"/><rect x="536.50" y="900.59" width="380.30" height="5.44" fill="#03030f"/><rect x="536.50" y="905.73" width="380.30" height="5.44" fill="#03030f"/><rect x="536.50" y="910.86" width="380.30" height="5.44" fill="#03030f"/></g><rect x="574.0" y="536" width="1" height="380" fill="rgba(200,200,230,0.17)"/><rect x="536.5" y="573.5" width="380" height="1" fill="rgba(200,200,230,0.17)"/><rect x="612.0" y="536" width="1" height="380" fill="rgba(200,200,230,0.17)"/><rect x="536.5" y="611.5" width="380" height="1" fill="rgba(200,200,230,0.17)"/><rect x="650.0" y="536" width="1" height="380" fill="rgba(200,200,230,0.17)"/><rect x="536.5" y="649.5" width="380" height="1" fill="rgba(200,200,230,0.17)"/><rect x="688.0" y="536" width="1" height="380" fill="rgba(200,200,230,0.17)"/><rect x="536.5" y="687.5" width="380" height="1" fill="rgba(200,200,230,0.17)"/><rect x="726.0" y="536" width="1" height="380" fill="rgba(200,200,230,0.17)"/><rect x="536.5" y="725.5" width="380" height="1" fill="rgba(200,200,230,0.17)"/><rect x="764.0" y="536" width="1" height="380" fill="rgba(200,200,230,0.17)"/><rect x="536.5" y="763.5" width="380" height="1" fill="rgba(200,200,230,0.17)"/><rect x="802.0" y="536" width="1" height="380" fill="rgba(200,200,230,0.17)"/><rect x="536.5" y="801.5" width="380" height="1" fill="rgba(200,200,230,0.17)"/><rect x="840.0" y="536" width="1" height="380" fill="rgba(200,200,230,0.17)"/><rect x="536.5" y="839.5" width="380" height="1" fill="rgba(200,200,230,0.17)"/><rect x="878.0" y="536" width="1" height="380" fill="rgba(200,200,230,0.17)"/><rect x="536.5" y="877.5" width="380" height="1" fill="rgba(200,200,230,0.17)"/><rect x="535.5" y="535.5" width="4" height="1" fill="#e0e0e0" /><text x="534" y="540" fill="#fff" text-anchor="end" >42.74</text><rect x="536.0" y="913" width="1" height="3.5" fill="#e0e0e0" /><text x="536.5" y="927.5" fill="#fff" text-anchor="middle" >229.53</text><rect x="535.5" y="573.5" width="4" height="1" fill="#e0e0e0" /><text x="534" y="578" fill="#fff" text-anchor="end" >42.74</text><rect x="574.0" y="913" width="1" height="3.5" fill="#e0e0e0" /><text x="574.5" y="927.5" fill="#fff" text-anchor="middle" >229.53</text><rect x="535.5" y="611.5" width="4" height="1" fill="#e0e0e0" /><text x="534" y="616" fill="#fff" text-anchor="end" >42.74</text><rect x="612.0" y="913" width="1" height="3.5" fill="#e0e0e0" /><text x="612.5" y="927.5" fill="#fff" text-anchor="middle" >229.53</text><rect x="535.5" y="649.5" width="4" height="1" fill="#e0e0e0" /><text x="534" y="654" fill="#fff" text-anchor="end" >42.74</text><rect x="650.0" y="913" width="1" height="3.5" fill="#e0e0e0" /><text x="650.5" y="927.5" fill="#fff" text-anchor="middle" >229.53</text><rect x="535.5" y="687.5" width="4" height="1" fill="#e0e0e0" /><text x="534" y="692" fill="#fff" text-anchor="end" >42.74</text><rect x="688.0" y="913" width="1" height="3.5" fill="#e0e0e0" /><text x="688.5" y="927.5" fill="#fff" text-anchor="middle" >229.53</text><rect x="535.5" y="725.5" width="4" height="1" fill="#e0e0e0" /><text x="534" y="730" fill="#fff" text-anchor="end" >42.75</text><rect x="726.0" y="913" width="1" height="3.5" fill="#e0e0e0" /><text x="726.5" y="927.5" fill="#fff" text-anchor="middle" >229.53</text><rect x="535.5" y="763.5" width="4" height="1" fill="#e0e0e0" /><text x="534" y="768" fill="#fff" text-anchor="end" >42.75</text><rect x="764.0" y="913" width="1" height="3.5" fill="#e0e0e0" /><text x="764.5" y="927.5" fill="#fff" text-anchor="middle" >229.52</text><rect x="535.5" y="801.5" width="4" height="1" fill="#e0e0e0" /><text x="534" y="806" fill="#fff" text-anchor="end" >42.75</text><rect x="802.0" y="913" width="1" height="3.5" fill="#e0e0e0" /><text x="802.5" y="927.5" fill="#fff" text-anchor="middle" >229.52</text><rect x="535.5" y="839.5" width="4" height="1" fill="#e0e0e0" /><text x="534" y="844" fill="#fff" text-anchor="end" >42.75</text><rect x="840.0" y="913" width="1" height="3.5" fill="#e0e0e0" /><text x="840.5" y="927.5" fill="#fff" text-anchor="middle" >229.52</text><rect x="535.5" y="877.5" width="4" height="1" fill="#e0e0e0" /><text x="534" y="882" fill="#fff" text-anchor="end" >42.75</text><rect x="878.0" y="913" width="1" height="3.5" fill="#e0e0e0" /><text x="878.5" y="927.5" fill="#fff" text-anchor="middle" >229.52</text><rect x="535.5" y="915.5" width="4" height="1" fill="#e0e0e0" /><text x="534" y="920" fill="#fff" text-anchor="end" >42.75</text><rect x="916.0" y="913" width="1" height="3.5" fill="#e0e0e0" /><text x="916.5" y="927.5" fill="#fff" text-anchor="middle" >229.52</text><text x="726.5" y="941" fill="#fff" text-anchor="middle" >RA---TAN (deg)</text><rect x="918" y="536" width="38" height="380" fill="#141414" /><rect x="919" y="913" width="37" height="3" fill="#a0a0a0" /><rect x="920" y="909" width="36" height="4" fill="#a0a0a0" /><rect x="923" y="905" width="33" height="4" fill="#a0a0a0" /><rect x="926" y="901" width="30" height="4" fill="#a0a0a0" /><rect x="927" y="897" width="29" height="4" fill="#a0a0a0" /><rect x="931" y="893" width="25" height="4" fill="#a0a0a0" /><rect x="934" y="889" width="22" height="4" fill="#a0a0a0" /><rect x="934" y="885" width="22" height="4" fill="#a0a0a0" /><rect x="937" y="881" width="19" height="4" fill="#a0a0a0" /><rect x="939" y="877" width="17" height="4" fill="#a0a0a0" /><rect x="938" y="873" width="18" height="4" fill="#a0a0a0" /><rect x="940" y="869" width="16" height="4" fill="#a0a0a0" /><rect x="939" y="865" width="17" height="4" fill="#a0a0a0" /><rect x="941" y="861" width="15" height="4" fill="#a0a0a0" /><rect x="941" y="857" width="15" height="4" fill="#a0a0a0" /><rect x="942" y="853" width="14" height="4" fill="#a0a0a0" /><rect x="942" y="849" width="14" height="4" fill="#a0a0a0" /><rect x="942" y="845" width="14" height="4" fill="#a0a0a0" /><rect x="944" y="841" width="12" height="4" fill="#a0a0a0" /><rect x="945" y="837" width="11" height="4" fill="#a0a0a0" /><rect x="945" y="833" width="11" height="4" fill="#a0a0a0" /><rect x="947" y="829" width="9" height="4" fill="#a0a0a0" /><rect x="945" y="825" width="11" height="4" fill="#a0a0a0" /><rect x="946" y="821" width="10" height="4" fill="#a0a0a0" /><rect x="946" y="817" width="10" height="4" fill="#a0a0a0" /><rect x="947" y="813" width="9" height="4" fill="#a0a0a0" /><rect x="946" y="809" width="10" height="4" fill="#a0a0a0" /><rect x="947" y="805" width="9" height="4" fill="#a0a0a0" /><rect x="947" y="801" width="9" height="4" fill="#a0a0a0" /><rect x="948" y="797" width="8" height="4" fill="#a0a0a0" /><rect x="949" y="793" width="7" height="4" fill="#a0a0a0" /><rect x="948" y="789" width="8" height="4" fill="#a0a0a0" /><rect x="949" y="785" width="7" height="4" fill="#a0a0a0" /><rect x="948" y="781" width="8" height="4" fill="#a0a0a0" /><rect x="950" y="777" width="6" height="4" fill="#a0a0a0" /><rect x="948" y="773" width="8" height="4" fill="#a0a0a0" /><rect x="948" y="769" width="8" height="4" fill="#a0a0a0" /><rect x="950" y="765" width="6" height="4" fill="#a0a0a0" /><rect x="950" y="761" width="6" height="4" fill="#a0a0a0" /><rect x="950" y="757" width="6" height="4" fill="#a0a0a0" /><rect x="950" y="753" width="6" height="4" fill="#a0a0a0" /><rect x="952" y="749" width="4" height="4" fill="#a0a0a0" /><rect x="951" y="745" width="5" height="4" fill="#a0a0a0" /><rect x="949" y="741" width="7" height="4" fill="#a0a0a0" /><rect x="949" y="733" width="7" height="4" fill="#a0a0a0" /><rect x="952" y="729" width="4" height="4" fill="#a0a0a0" /><rect x="952" y="717" width="4" height="4" fill="#a0a0a0" /><rect x="951" y="713" width="5" height="4" fill="#a0a0a0" /><rect x="952" y="705" width="4" height="4" fill="#a0a0a0" /><rect x="949" y="701" width="7" height="4" fill="#a0a0a0" /><rect x="953" y="697" width="3" height="4" fill="#a0a0a0" /><rect x="950" y="693" width="6" height="4" fill="#a0a0a0" /><rect x="953" y="689" width="3" height="4" fill="#a0a0a0" /><rect x="952" y="685" width="4" height="4" fill="#a0a0a0" /><rect x="950" y="681" width="6" height="4" fill="#a0a0a0" /><rect x="949" y="673" width="7" height="4" fill="#a0a0a0" /><rect x="951" y="661" width="5" height="4" fill="#a0a0a0" /><rect x="953" y="657" width="3" height="4" fill="#a0a0a0" /><rect x="953" y="653" width="3" height="4" fill="#a0a0a0" /><rect x="949" y="649" width="7" height="4" fill="#a0a0a0" /><rect x="952" y="645" width="4" height="4" fill="#a0a0a0" /><rect x="952" y="637" width="4" height="4" fill="#a0a0a0" /><rect x="951" y="633" width="5" height="4" fill="#a0a0a0" /><rect x="952" y="629" width="4" height="4" fill="#a0a0a0" /><rect x="953" y="577" width="3" height="4" fill="#a0a0a0" /><defs><linearGradient id="cb" x1="0" y1="1" x2="0" y2="0"><stop offset="0" stop-color="rgb(0, 0, 0)"/><stop offset="0.1" stop-color="rgb(0, 0, 90)"/><stop offset="0.2" stop-color="rgb(10, 0, 225)"/><stop offset="0.3" stop-color="rgb(100, 0, 200)"/><stop offset="0.4" stop-color="rgb(160, 0, 170)"/><stop offset="0.5" stop-color="rgb(230, 10, 150)"/><stop offset="0.6" stop-color="rgb(240, 100, 90)"/><stop offset="0.7" stop-color="rgb(242, 150, 50)"/><stop offset="0.8" stop-color="rgb(245, 240, 0)"/><stop offset="0.9" stop-color="rgb(250, 250, 140)"/><stop offset="1.0" stop-color="rgb(255, 255, 255)"/></linearGradient></defs><rect x="962" y="536" width="20" height="380.5" fill="url(#cb)" /><rect x="979" y="573.5" width="3" height="1.2" fill="#ffffff" /><text x="985" y="578" fill="#fff" >4.</text><rect x="979" y="611.5" width="3" height="1.2" fill="#ffffff" /><text x="985" y="616" fill="#fff" >3.</text><rect x="979" y="649.5" width="3" height="1.2" fill="#ffffff" /><text x="985" y="654" fill="#fff" >3.</text><rect x="979" y="687.5" width="3" height="1.2" fill="#ffffff" /><text x="985" y="692" fill="#fff" >2.</text><rect x="979" y="725.5" width="3" height="1.2" fill="#ffffff" /><text x="985" y="730" fill="#fff" >2.</text><rect x="979" y="763.5" width="3" height="1.2" fill="#ffffff" /><text x="985" y="768" fill="#fff" >1.</text><rect x="979" y="801.5" width="3" height="1.2" fill="#ffffff" /><text x="985" y="806" fill="#fff" >1.</text><rect x="979" y="839.5" width="3" height="1.2" fill="#ffffff" /><text x="985" y="844" fill="#fff" >0.</text><rect x="979" y="877.5" width="3" height="1.2" fill="#ffffff" /><text x="985" y="882" fill="#fff" >0.</text><text x="985" y="540" fill="#fff" >4</text><polygon points="984.6,536 999,528 999,544" fill="#ffffff"/><rect x="979" y="916.5" width="3" height="1.2" fill="#ffffff" /><polygon points="987,917.5 999,909 999,926" fill="#000" stroke="#fff" stroke-width="1" stroke-dasharray="2,1"/><text x="985" y="921" fill="#fff" >-0</text></svg></body></html>
